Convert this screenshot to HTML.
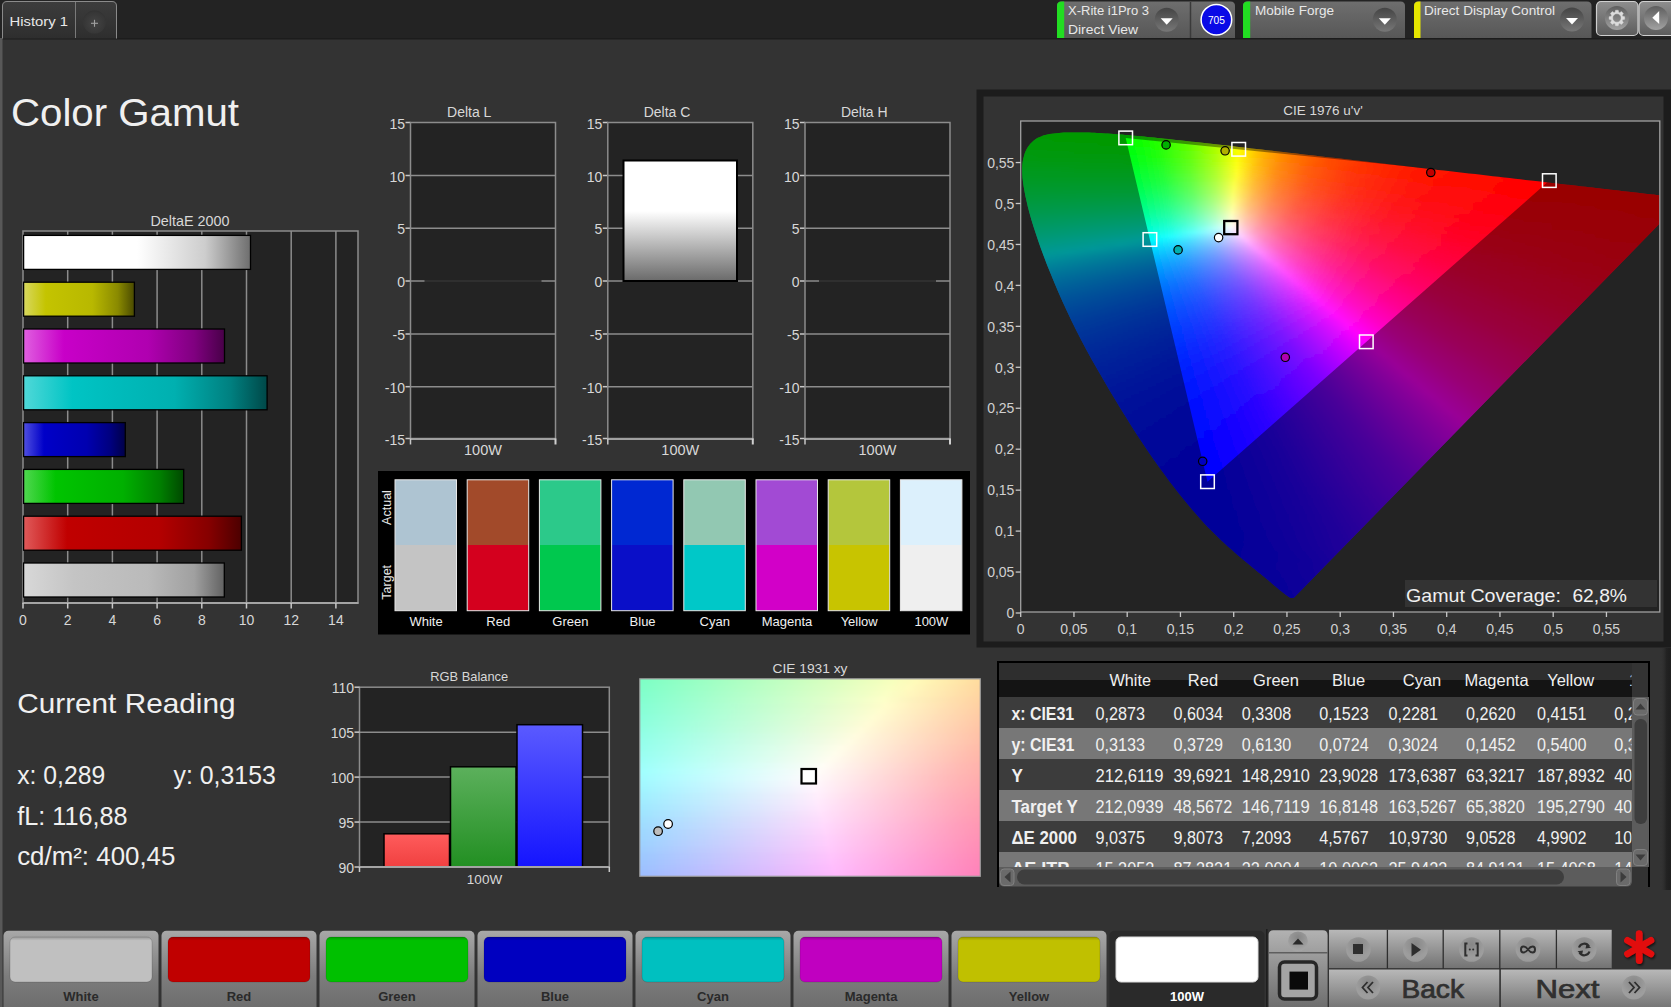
<!DOCTYPE html>
<html><head><meta charset="utf-8"><style>
html,body{margin:0;padding:0;background:#333;overflow:hidden}
svg{display:block;font-family:"Liberation Sans",sans-serif}
</style></head><body>
<svg width="1671" height="1007" viewBox="0 0 1671 1007">
<defs><linearGradient id="tabg" x1="0" y1="0" x2="0" y2="1"><stop offset="0" stop-color="#3c3c3c"/><stop offset="1" stop-color="#2e2e2e"/></linearGradient><radialGradient id="plusg" cx="0.5" cy="0.55" r="0.6"><stop offset="0" stop-color="#444444"/><stop offset="0.8" stop-color="#363636"/><stop offset="1" stop-color="#2e2e2e"/></radialGradient><linearGradient id="devg" x1="0" y1="0" x2="0" y2="1"><stop offset="0" stop-color="#6e6e6e"/><stop offset="1" stop-color="#575757"/></linearGradient><linearGradient id="ddg" x1="0" y1="0" x2="0" y2="1"><stop offset="0" stop-color="#444444"/><stop offset="1" stop-color="#777777"/></linearGradient><linearGradient id="btng" x1="0" y1="0" x2="0" y2="1"><stop offset="0" stop-color="#8e8e8e"/><stop offset="1" stop-color="#5c5c5c"/></linearGradient><linearGradient id="gcg" x1="0" y1="0" x2="0" y2="1"><stop offset="0" stop-color="#5e5e5e"/><stop offset="1" stop-color="#a2a2a2"/></linearGradient><linearGradient id="deb0" x1="0" y1="0" x2="1" y2="0"><stop offset="0" stop-color="#ffffff"/><stop offset="0.5" stop-color="#ffffff"/><stop offset="0.8" stop-color="#cdcdcd"/><stop offset="1" stop-color="#6e6e6e"/></linearGradient><linearGradient id="deb1" x1="0" y1="0" x2="1" y2="0"><stop offset="0" stop-color="#d8d860"/><stop offset="0.2" stop-color="#c4c400"/><stop offset="0.62" stop-color="#b8b800"/><stop offset="0.85" stop-color="#8a8a00"/><stop offset="1" stop-color="#4a4a00"/></linearGradient><linearGradient id="deb2" x1="0" y1="0" x2="1" y2="0"><stop offset="0" stop-color="#e060e0"/><stop offset="0.2" stop-color="#c800c8"/><stop offset="0.62" stop-color="#b000b0"/><stop offset="0.85" stop-color="#800080"/><stop offset="1" stop-color="#480048"/></linearGradient><linearGradient id="deb3" x1="0" y1="0" x2="1" y2="0"><stop offset="0" stop-color="#50d8d8"/><stop offset="0.2" stop-color="#00c4c4"/><stop offset="0.62" stop-color="#00b0b0"/><stop offset="0.85" stop-color="#008080"/><stop offset="1" stop-color="#004848"/></linearGradient><linearGradient id="deb4" x1="0" y1="0" x2="1" y2="0"><stop offset="0" stop-color="#5050e0"/><stop offset="0.2" stop-color="#0000c8"/><stop offset="0.62" stop-color="#0000b0"/><stop offset="0.85" stop-color="#000080"/><stop offset="1" stop-color="#000048"/></linearGradient><linearGradient id="deb5" x1="0" y1="0" x2="1" y2="0"><stop offset="0" stop-color="#50d850"/><stop offset="0.2" stop-color="#00c400"/><stop offset="0.62" stop-color="#00b000"/><stop offset="0.85" stop-color="#008000"/><stop offset="1" stop-color="#004800"/></linearGradient><linearGradient id="deb6" x1="0" y1="0" x2="1" y2="0"><stop offset="0" stop-color="#e05a5a"/><stop offset="0.2" stop-color="#c00000"/><stop offset="0.62" stop-color="#b40000"/><stop offset="0.85" stop-color="#860000"/><stop offset="1" stop-color="#4c0000"/></linearGradient><linearGradient id="deb7" x1="0" y1="0" x2="1" y2="0"><stop offset="0" stop-color="#d8d8d8"/><stop offset="0.25" stop-color="#c4c4c4"/><stop offset="0.62" stop-color="#bababa"/><stop offset="0.85" stop-color="#a0a0a0"/><stop offset="1" stop-color="#626262"/></linearGradient><linearGradient id="dcg" x1="0" y1="0" x2="0" y2="1"><stop offset="0" stop-color="#ffffff"/><stop offset="0.42" stop-color="#ffffff"/><stop offset="1" stop-color="#6a6a6a"/></linearGradient><clipPath id="hsclip"><path d="M1294.2,597.4 L1294.2,597.4 L1294.2,597.4 L1294.1,597.4 L1294.1,597.4 L1294.1,597.4 L1294.0,597.4 L1294.0,597.4 L1293.9,597.5 L1293.9,597.5 L1293.9,597.6 L1293.8,597.6 L1293.8,597.7 L1293.7,597.7 L1293.7,597.7 L1293.6,597.7 L1293.6,597.7 L1293.5,597.7 L1293.4,597.7 L1293.4,597.7 L1293.3,597.8 L1293.2,597.8 L1293.2,597.9 L1293.1,597.9 L1293.0,597.9 L1292.9,598.0 L1292.9,598.0 L1292.8,598.0 L1292.7,598.0 L1292.6,598.0 L1292.5,598.0 L1292.4,598.0 L1292.3,598.0 L1292.2,598.0 L1292.0,598.0 L1291.9,598.0 L1291.8,598.0 L1291.7,598.0 L1291.5,598.0 L1291.4,598.0 L1291.2,598.0 L1291.1,598.0 L1290.9,598.0 L1290.7,597.9 L1290.5,597.8 L1290.2,597.7 L1289.9,597.5 L1289.6,597.4 L1289.3,597.2 L1288.9,596.9 L1288.5,596.7 L1288.1,596.4 L1287.6,596.1 L1287.1,595.7 L1286.5,595.3 L1286.0,594.9 L1285.4,594.5 L1284.8,594.1 L1284.2,593.6 L1283.5,593.0 L1282.8,592.5 L1282.0,591.8 L1281.2,591.2 L1280.3,590.5 L1279.4,589.7 L1278.4,588.9 L1277.4,588.1 L1276.4,587.2 L1275.3,586.3 L1274.2,585.4 L1273.1,584.4 L1271.9,583.4 L1270.6,582.3 L1269.3,581.2 L1268.0,580.1 L1266.6,579.0 L1265.2,577.8 L1263.7,576.5 L1262.1,575.2 L1260.4,573.8 L1258.6,572.4 L1256.7,570.9 L1254.8,569.3 L1252.8,567.7 L1250.8,566.0 L1248.7,564.3 L1246.6,562.5 L1244.4,560.7 L1242.1,558.8 L1239.7,556.8 L1237.3,554.7 L1234.7,552.4 L1232.1,550.1 L1229.3,547.7 L1226.5,545.2 L1223.6,542.5 L1220.6,539.7 L1217.6,536.7 L1214.5,533.7 L1211.3,530.5 L1207.9,527.2 L1204.4,523.4 L1200.6,519.3 L1196.7,514.8 L1192.5,510.0 L1188.1,504.8 L1183.6,499.3 L1178.9,493.5 L1174.1,487.3 L1169.2,480.9 L1164.2,474.0 L1159.0,466.9 L1153.7,459.4 L1148.3,451.7 L1142.8,443.6 L1137.3,435.2 L1131.7,426.4 L1126.0,417.3 L1120.2,408.1 L1114.5,398.6 L1108.9,389.2 L1103.3,379.6 L1097.6,369.8 L1092.0,359.9 L1086.5,349.9 L1081.2,340.1 L1076.2,330.3 L1071.5,320.7 L1066.9,311.0 L1062.5,301.4 L1058.3,291.9 L1054.4,282.7 L1050.7,273.8 L1047.2,265.2 L1044.0,256.8 L1041.0,248.7 L1038.2,240.8 L1035.7,233.3 L1033.4,226.2 L1031.3,219.5 L1029.5,213.1 L1027.9,207.0 L1026.6,201.3 L1025.4,195.9 L1024.4,190.8 L1023.6,186.1 L1023.0,181.8 L1022.5,177.8 L1022.3,174.0 L1022.2,170.5 L1022.2,167.2 L1022.4,164.0 L1022.8,161.1 L1023.3,158.4 L1024.0,155.9 L1024.7,153.5 L1025.6,151.2 L1026.7,149.1 L1027.9,147.0 L1029.2,145.2 L1030.6,143.5 L1032.2,141.9 L1033.8,140.5 L1035.5,139.2 L1037.3,138.1 L1039.2,137.2 L1041.2,136.4 L1043.2,135.6 L1045.3,135.0 L1047.5,134.4 L1049.7,134.0 L1052.0,133.7 L1054.3,133.4 L1056.7,133.2 L1059.0,132.9 L1061.5,132.8 L1063.9,132.6 L1066.4,132.6 L1069.0,132.5 L1071.5,132.5 L1074.0,132.4 L1076.5,132.4 L1079.0,132.4 L1081.6,132.5 L1084.1,132.5 L1086.6,132.6 L1089.2,132.6 L1091.8,132.7 L1094.4,132.8 L1097.0,132.9 L1099.7,133.1 L1102.4,133.2 L1105.1,133.4 L1107.8,133.6 L1110.6,133.7 L1113.4,133.9 L1116.3,134.2 L1119.2,134.4 L1122.2,134.6 L1125.1,134.9 L1128.2,135.1 L1131.2,135.4 L1134.3,135.7 L1137.5,136.0 L1140.7,136.3 L1144.0,136.6 L1147.3,136.9 L1150.7,137.3 L1154.1,137.6 L1157.6,138.0 L1161.1,138.3 L1164.7,138.7 L1168.4,139.1 L1172.2,139.5 L1176.0,139.9 L1179.8,140.3 L1183.8,140.8 L1187.8,141.2 L1191.8,141.7 L1195.9,142.1 L1200.1,142.6 L1204.4,143.1 L1208.8,143.6 L1213.2,144.1 L1217.7,144.6 L1222.3,145.1 L1226.9,145.6 L1231.7,146.1 L1236.5,146.7 L1241.3,147.2 L1246.3,147.8 L1251.3,148.4 L1256.4,149.0 L1261.6,149.6 L1266.9,150.2 L1272.2,150.8 L1277.7,151.4 L1283.2,152.0 L1288.7,152.7 L1294.4,153.3 L1300.1,154.0 L1305.9,154.7 L1311.8,155.3 L1317.7,156.0 L1323.7,156.7 L1329.8,157.4 L1335.9,158.1 L1342.1,158.8 L1348.3,159.5 L1354.6,160.3 L1361.0,161.0 L1367.4,161.7 L1373.8,162.5 L1380.2,163.2 L1386.7,163.9 L1393.2,164.7 L1399.8,165.5 L1406.3,166.2 L1412.7,167.0 L1419.1,167.7 L1425.4,168.4 L1431.7,169.1 L1437.9,169.9 L1444.2,170.6 L1450.4,171.3 L1456.6,172.0 L1462.8,172.7 L1469.0,173.4 L1475.2,174.1 L1481.2,174.8 L1487.1,175.5 L1492.9,176.2 L1498.6,176.8 L1504.2,177.4 L1509.7,178.1 L1515.1,178.7 L1520.4,179.3 L1525.5,179.9 L1530.6,180.5 L1535.6,181.0 L1540.4,181.6 L1545.2,182.2 L1549.8,182.7 L1554.2,183.2 L1558.6,183.7 L1562.8,184.2 L1566.9,184.7 L1570.9,185.1 L1574.8,185.6 L1578.5,186.0 L1582.2,186.4 L1585.7,186.8 L1589.1,187.2 L1592.5,187.6 L1595.7,188.0 L1598.9,188.3 L1601.9,188.7 L1604.9,189.0 L1607.8,189.3 L1610.6,189.7 L1613.4,190.0 L1616.1,190.3 L1618.7,190.6 L1621.3,190.9 L1623.8,191.2 L1626.3,191.5 L1628.7,191.8 L1631.0,192.0 L1633.3,192.3 L1635.5,192.5 L1637.6,192.8 L1639.6,193.0 L1641.6,193.3 L1643.5,193.5 L1645.4,193.7 L1647.2,193.9 L1648.9,194.1 L1650.5,194.3 L1652.1,194.4 L1653.6,194.6 L1655.1,194.8 L1656.4,194.9 L1657.7,195.1 L1659.0,195.2 L1660.2,195.4 L1661.4,195.5 L1662.5,195.6 L1663.6,195.8 L1664.6,195.9 L1665.6,196.0 L1666.6,196.1 L1667.5,196.2 L1668.3,196.3 L1669.1,196.4 L1669.9,196.5 L1670.6,196.6 L1671.3,196.6 L1671.9,196.7 L1672.5,196.8 L1673.0,196.8 L1673.4,196.9 L1673.9,196.9 L1674.4,197.0 L1674.8,197.1 L1675.2,197.1 L1675.6,197.1 L1676.0,197.2 L1676.4,197.2 L1676.9,197.3 L1677.5,197.4 L1678.1,197.4 L1678.8,197.5 L1679.5,197.6 L1680.2,197.7 L1680.9,197.8 L1681.6,197.8 L1682.3,197.9 L1683.0,198.0 L1683.7,198.1 L1684.2,198.1 L1684.6,198.2 Z"/></clipPath><clipPath id="plotclip"><rect x="1020.7" y="121" width="639.0999999999999" height="491"/></clipPath><filter id="hblur" x="-5%" y="-5%" width="110%" height="110%"><feGaussianBlur stdDeviation="0.8 1.5"/></filter><linearGradient id="h0" gradientUnits="userSpaceOnUse" x1="1036.7" y1="0" x2="1138.7" y2="0"><stop offset="0.000" stop-color="#00ff00"/><stop offset="0.882" stop-color="#02ff00"/><stop offset="1.000" stop-color="#0eff00"/></linearGradient><linearGradient id="h1" gradientUnits="userSpaceOnUse" x1="1027.7" y1="0" x2="1179.7" y2="0"><stop offset="0.000" stop-color="#00ff00"/><stop offset="0.658" stop-color="#02ff00"/><stop offset="0.842" stop-color="#24ff00"/><stop offset="1.000" stop-color="#50ff00"/></linearGradient><linearGradient id="h2" gradientUnits="userSpaceOnUse" x1="1022.7" y1="0" x2="1214.7" y2="0"><stop offset="0.000" stop-color="#00ff02"/><stop offset="0.552" stop-color="#02ff00"/><stop offset="0.698" stop-color="#25ff00"/><stop offset="0.865" stop-color="#64ff00"/><stop offset="1.000" stop-color="#a9ff00"/></linearGradient><linearGradient id="h3" gradientUnits="userSpaceOnUse" x1="1019.7" y1="0" x2="1251.7" y2="0"><stop offset="0.000" stop-color="#00ff06"/><stop offset="0.474" stop-color="#03ff00"/><stop offset="0.595" stop-color="#26ff00"/><stop offset="0.733" stop-color="#66ff00"/><stop offset="0.862" stop-color="#b8ff00"/><stop offset="0.948" stop-color="#feff00"/><stop offset="1.000" stop-color="#ffd700"/></linearGradient><linearGradient id="h4" gradientUnits="userSpaceOnUse" x1="1017.7" y1="0" x2="1285.7" y2="0"><stop offset="0.000" stop-color="#00ff09"/><stop offset="0.418" stop-color="#02ff01"/><stop offset="0.522" stop-color="#25ff00"/><stop offset="0.634" stop-color="#60ff00"/><stop offset="0.739" stop-color="#acff00"/><stop offset="0.828" stop-color="#fffe00"/><stop offset="0.896" stop-color="#ffc400"/><stop offset="0.985" stop-color="#ff8f00"/><stop offset="1.000" stop-color="#ff8800"/></linearGradient><linearGradient id="h5" gradientUnits="userSpaceOnUse" x1="1016.7" y1="0" x2="1320.7" y2="0"><stop offset="0.000" stop-color="#00ff0d"/><stop offset="0.375" stop-color="#02ff04"/><stop offset="0.467" stop-color="#25ff02"/><stop offset="0.566" stop-color="#62ff00"/><stop offset="0.658" stop-color="#b0ff00"/><stop offset="0.730" stop-color="#fdff00"/><stop offset="0.803" stop-color="#ffbb00"/><stop offset="0.888" stop-color="#ff8500"/><stop offset="1.000" stop-color="#ff5900"/></linearGradient><linearGradient id="h6" gradientUnits="userSpaceOnUse" x1="1015.7" y1="0" x2="1355.7" y2="0"><stop offset="0.000" stop-color="#00ff11"/><stop offset="0.341" stop-color="#02ff09"/><stop offset="0.418" stop-color="#23ff06"/><stop offset="0.506" stop-color="#5fff03"/><stop offset="0.588" stop-color="#adff01"/><stop offset="0.653" stop-color="#fbff00"/><stop offset="0.671" stop-color="#ffed00"/><stop offset="0.729" stop-color="#ffb200"/><stop offset="0.806" stop-color="#ff7f00"/><stop offset="0.912" stop-color="#ff5200"/><stop offset="1.000" stop-color="#ff3b00"/></linearGradient><linearGradient id="h7" gradientUnits="userSpaceOnUse" x1="1014.7" y1="0" x2="1390.7" y2="0"><stop offset="0.000" stop-color="#00ff16"/><stop offset="0.314" stop-color="#02ff0d"/><stop offset="0.383" stop-color="#23ff0b"/><stop offset="0.463" stop-color="#61ff08"/><stop offset="0.537" stop-color="#b0ff05"/><stop offset="0.596" stop-color="#fffe03"/><stop offset="0.644" stop-color="#ffc201"/><stop offset="0.707" stop-color="#ff8c00"/><stop offset="0.793" stop-color="#ff5f00"/><stop offset="0.920" stop-color="#ff3600"/><stop offset="1.000" stop-color="#ff2600"/></linearGradient><linearGradient id="h8" gradientUnits="userSpaceOnUse" x1="1014.7" y1="0" x2="1424.7" y2="0"><stop offset="0.000" stop-color="#00ff1b"/><stop offset="0.293" stop-color="#03ff13"/><stop offset="0.356" stop-color="#26ff10"/><stop offset="0.429" stop-color="#66ff0d"/><stop offset="0.498" stop-color="#b7ff0a"/><stop offset="0.546" stop-color="#fffc08"/><stop offset="0.590" stop-color="#ffc105"/><stop offset="0.649" stop-color="#ff8b02"/><stop offset="0.727" stop-color="#ff5d00"/><stop offset="0.844" stop-color="#ff3500"/><stop offset="1.000" stop-color="#ff1800"/></linearGradient><linearGradient id="h9" gradientUnits="userSpaceOnUse" x1="1014.7" y1="0" x2="1458.7" y2="0"><stop offset="0.000" stop-color="#00ff20"/><stop offset="0.270" stop-color="#02ff19"/><stop offset="0.329" stop-color="#25ff17"/><stop offset="0.392" stop-color="#60ff14"/><stop offset="0.455" stop-color="#b1ff11"/><stop offset="0.500" stop-color="#fbff0f"/><stop offset="0.518" stop-color="#ffe40d"/><stop offset="0.563" stop-color="#ffaa08"/><stop offset="0.622" stop-color="#ff7904"/><stop offset="0.707" stop-color="#ff4c01"/><stop offset="0.833" stop-color="#ff2700"/><stop offset="1.000" stop-color="#ff0f00"/></linearGradient><linearGradient id="h10" gradientUnits="userSpaceOnUse" x1="1014.7" y1="0" x2="1494.7" y2="0"><stop offset="0.000" stop-color="#00ff26"/><stop offset="0.254" stop-color="#03ff1f"/><stop offset="0.308" stop-color="#27ff1d"/><stop offset="0.367" stop-color="#64ff1b"/><stop offset="0.421" stop-color="#b2ff19"/><stop offset="0.463" stop-color="#fdff17"/><stop offset="0.508" stop-color="#ffb80f"/><stop offset="0.558" stop-color="#ff8409"/><stop offset="0.629" stop-color="#ff5604"/><stop offset="0.733" stop-color="#ff2f01"/><stop offset="0.896" stop-color="#ff1100"/><stop offset="1.000" stop-color="#ff0700"/></linearGradient><linearGradient id="h11" gradientUnits="userSpaceOnUse" x1="1014.7" y1="0" x2="1528.7" y2="0"><stop offset="0.000" stop-color="#00ff2b"/><stop offset="0.237" stop-color="#02ff26"/><stop offset="0.288" stop-color="#26ff25"/><stop offset="0.342" stop-color="#64ff23"/><stop offset="0.393" stop-color="#b2ff21"/><stop offset="0.432" stop-color="#feff1f"/><stop offset="0.467" stop-color="#ffc116"/><stop offset="0.510" stop-color="#ff8d0f"/><stop offset="0.572" stop-color="#ff5d09"/><stop offset="0.661" stop-color="#ff3503"/><stop offset="0.798" stop-color="#ff1600"/><stop offset="1.000" stop-color="#ff0200"/></linearGradient><linearGradient id="h12" gradientUnits="userSpaceOnUse" x1="1014.7" y1="0" x2="1564.7" y2="0"><stop offset="0.000" stop-color="#00ff31"/><stop offset="0.222" stop-color="#02ff2e"/><stop offset="0.265" stop-color="#22ff2d"/><stop offset="0.316" stop-color="#5eff2b"/><stop offset="0.364" stop-color="#acff2a"/><stop offset="0.404" stop-color="#fffe29"/><stop offset="0.433" stop-color="#ffc51f"/><stop offset="0.473" stop-color="#ff9015"/><stop offset="0.527" stop-color="#ff610d"/><stop offset="0.607" stop-color="#ff3807"/><stop offset="0.727" stop-color="#ff1802"/><stop offset="0.924" stop-color="#ff0300"/><stop offset="1.000" stop-color="#ff0000"/></linearGradient><linearGradient id="h13" gradientUnits="userSpaceOnUse" x1="1014.7" y1="0" x2="1598.7" y2="0"><stop offset="0.000" stop-color="#00ff37"/><stop offset="0.212" stop-color="#03ff35"/><stop offset="0.253" stop-color="#24ff35"/><stop offset="0.301" stop-color="#63ff34"/><stop offset="0.346" stop-color="#b3ff33"/><stop offset="0.380" stop-color="#fffd32"/><stop offset="0.408" stop-color="#ffc327"/><stop offset="0.445" stop-color="#ff8e1b"/><stop offset="0.497" stop-color="#ff5f12"/><stop offset="0.572" stop-color="#ff370a"/><stop offset="0.685" stop-color="#ff1703"/><stop offset="0.870" stop-color="#ff0200"/><stop offset="1.000" stop-color="#ff0000"/></linearGradient><linearGradient id="h14" gradientUnits="userSpaceOnUse" x1="1014.7" y1="0" x2="1634.7" y2="0"><stop offset="0.000" stop-color="#00ff3e"/><stop offset="0.200" stop-color="#02ff3e"/><stop offset="0.239" stop-color="#23ff3e"/><stop offset="0.284" stop-color="#62ff3e"/><stop offset="0.326" stop-color="#b3ff3e"/><stop offset="0.355" stop-color="#faff3e"/><stop offset="0.361" stop-color="#fff33b"/><stop offset="0.390" stop-color="#ffb62c"/><stop offset="0.429" stop-color="#ff811f"/><stop offset="0.481" stop-color="#ff5414"/><stop offset="0.558" stop-color="#ff2e0b"/><stop offset="0.677" stop-color="#ff1104"/><stop offset="0.861" stop-color="#ff0000"/><stop offset="1.000" stop-color="#ff0000"/></linearGradient><linearGradient id="h15" gradientUnits="userSpaceOnUse" x1="1014.7" y1="0" x2="1664.7" y2="0"><stop offset="0.000" stop-color="#00ff45"/><stop offset="0.194" stop-color="#03ff47"/><stop offset="0.231" stop-color="#26ff47"/><stop offset="0.271" stop-color="#62ff48"/><stop offset="0.311" stop-color="#b4ff49"/><stop offset="0.338" stop-color="#fcff4a"/><stop offset="0.369" stop-color="#ffba36"/><stop offset="0.403" stop-color="#ff8628"/><stop offset="0.449" stop-color="#ff591b"/><stop offset="0.517" stop-color="#ff3310"/><stop offset="0.622" stop-color="#ff1407"/><stop offset="0.791" stop-color="#ff0101"/><stop offset="1.000" stop-color="#ff0000"/></linearGradient><linearGradient id="h16" gradientUnits="userSpaceOnUse" x1="1014.7" y1="0" x2="1664.7" y2="0"><stop offset="0.000" stop-color="#00ff4c"/><stop offset="0.194" stop-color="#02ff50"/><stop offset="0.231" stop-color="#25ff52"/><stop offset="0.271" stop-color="#61ff53"/><stop offset="0.308" stop-color="#adff55"/><stop offset="0.338" stop-color="#fdff56"/><stop offset="0.366" stop-color="#ffbe41"/><stop offset="0.400" stop-color="#ff8830"/><stop offset="0.446" stop-color="#ff5a21"/><stop offset="0.514" stop-color="#ff3314"/><stop offset="0.618" stop-color="#ff140a"/><stop offset="0.785" stop-color="#ff0103"/><stop offset="1.000" stop-color="#ff0000"/></linearGradient><linearGradient id="h17" gradientUnits="userSpaceOnUse" x1="1015.7" y1="0" x2="1665.7" y2="0"><stop offset="0.000" stop-color="#00ff53"/><stop offset="0.194" stop-color="#02ff5a"/><stop offset="0.231" stop-color="#26ff5c"/><stop offset="0.271" stop-color="#63ff5f"/><stop offset="0.308" stop-color="#b1ff61"/><stop offset="0.335" stop-color="#fbff63"/><stop offset="0.345" stop-color="#ffe95c"/><stop offset="0.372" stop-color="#ffae46"/><stop offset="0.409" stop-color="#ff7a33"/><stop offset="0.458" stop-color="#ff4f23"/><stop offset="0.532" stop-color="#ff2a15"/><stop offset="0.649" stop-color="#ff0e0a"/><stop offset="0.815" stop-color="#ff0003"/><stop offset="1.000" stop-color="#ff0000"/></linearGradient><linearGradient id="h18" gradientUnits="userSpaceOnUse" x1="1015.7" y1="0" x2="1665.7" y2="0"><stop offset="0.000" stop-color="#00ff5b"/><stop offset="0.197" stop-color="#03ff65"/><stop offset="0.234" stop-color="#28ff68"/><stop offset="0.274" stop-color="#68ff6b"/><stop offset="0.311" stop-color="#b9ff6f"/><stop offset="0.335" stop-color="#fcff72"/><stop offset="0.366" stop-color="#ffb755"/><stop offset="0.400" stop-color="#ff833f"/><stop offset="0.446" stop-color="#ff562c"/><stop offset="0.514" stop-color="#ff301c"/><stop offset="0.618" stop-color="#ff120f"/><stop offset="0.785" stop-color="#ff0005"/><stop offset="1.000" stop-color="#ff0001"/></linearGradient><linearGradient id="h19" gradientUnits="userSpaceOnUse" x1="1016.7" y1="0" x2="1664.7" y2="0"><stop offset="0.000" stop-color="#00ff63"/><stop offset="0.198" stop-color="#03ff70"/><stop offset="0.231" stop-color="#25ff74"/><stop offset="0.272" stop-color="#65ff78"/><stop offset="0.309" stop-color="#b6ff7d"/><stop offset="0.333" stop-color="#f9ff81"/><stop offset="0.340" stop-color="#fff27b"/><stop offset="0.364" stop-color="#ffb861"/><stop offset="0.398" stop-color="#ff8348"/><stop offset="0.444" stop-color="#ff5533"/><stop offset="0.512" stop-color="#ff2f21"/><stop offset="0.617" stop-color="#ff1112"/><stop offset="0.781" stop-color="#ff0007"/><stop offset="1.000" stop-color="#ff0001"/></linearGradient><linearGradient id="h20" gradientUnits="userSpaceOnUse" x1="1017.7" y1="0" x2="1665.7" y2="0"><stop offset="0.000" stop-color="#00ff6c"/><stop offset="0.194" stop-color="#01ff7c"/><stop offset="0.228" stop-color="#22ff80"/><stop offset="0.265" stop-color="#5bff85"/><stop offset="0.302" stop-color="#abff8b"/><stop offset="0.333" stop-color="#fffe90"/><stop offset="0.355" stop-color="#ffc674"/><stop offset="0.386" stop-color="#ff9058"/><stop offset="0.429" stop-color="#ff5f3f"/><stop offset="0.491" stop-color="#ff372a"/><stop offset="0.583" stop-color="#ff1719"/><stop offset="0.735" stop-color="#ff020b"/><stop offset="1.000" stop-color="#ff0002"/></linearGradient><linearGradient id="h21" gradientUnits="userSpaceOnUse" x1="1018.7" y1="0" x2="1664.7" y2="0"><stop offset="0.000" stop-color="#00ff74"/><stop offset="0.195" stop-color="#01ff88"/><stop offset="0.229" stop-color="#23ff8d"/><stop offset="0.266" stop-color="#5eff94"/><stop offset="0.303" stop-color="#afff9b"/><stop offset="0.331" stop-color="#fdffa1"/><stop offset="0.359" stop-color="#ffbb7c"/><stop offset="0.390" stop-color="#ff875f"/><stop offset="0.433" stop-color="#ff5944"/><stop offset="0.495" stop-color="#ff332e"/><stop offset="0.591" stop-color="#ff151b"/><stop offset="0.746" stop-color="#ff010c"/><stop offset="1.000" stop-color="#ff0003"/></linearGradient><linearGradient id="h22" gradientUnits="userSpaceOnUse" x1="1018.7" y1="0" x2="1664.7" y2="0"><stop offset="0.000" stop-color="#00ff7d"/><stop offset="0.198" stop-color="#02ff95"/><stop offset="0.232" stop-color="#26ff9c"/><stop offset="0.269" stop-color="#63ffa3"/><stop offset="0.303" stop-color="#afffac"/><stop offset="0.331" stop-color="#ffffb3"/><stop offset="0.356" stop-color="#ffbf8c"/><stop offset="0.387" stop-color="#ff8a6b"/><stop offset="0.430" stop-color="#ff5a4d"/><stop offset="0.492" stop-color="#ff3334"/><stop offset="0.588" stop-color="#ff141f"/><stop offset="0.743" stop-color="#ff010f"/><stop offset="1.000" stop-color="#ff0004"/></linearGradient><linearGradient id="h23" gradientUnits="userSpaceOnUse" x1="1019.7" y1="0" x2="1665.7" y2="0"><stop offset="0.000" stop-color="#00ff87"/><stop offset="0.198" stop-color="#03ffa3"/><stop offset="0.232" stop-color="#27ffaa"/><stop offset="0.269" stop-color="#65ffb4"/><stop offset="0.303" stop-color="#b4ffbd"/><stop offset="0.328" stop-color="#fbffc6"/><stop offset="0.347" stop-color="#ffcfa6"/><stop offset="0.375" stop-color="#ff9881"/><stop offset="0.412" stop-color="#ff6860"/><stop offset="0.464" stop-color="#ff4044"/><stop offset="0.545" stop-color="#ff1e2b"/><stop offset="0.675" stop-color="#ff0617"/><stop offset="0.842" stop-color="#ff000b"/><stop offset="1.000" stop-color="#ff0005"/></linearGradient><linearGradient id="h24" gradientUnits="userSpaceOnUse" x1="1020.7" y1="0" x2="1664.7" y2="0"><stop offset="0.000" stop-color="#00ff91"/><stop offset="0.199" stop-color="#03ffb2"/><stop offset="0.230" stop-color="#23ffb9"/><stop offset="0.267" stop-color="#61ffc4"/><stop offset="0.301" stop-color="#b0ffcf"/><stop offset="0.329" stop-color="#fffcd7"/><stop offset="0.351" stop-color="#ffc2ad"/><stop offset="0.379" stop-color="#ff8f87"/><stop offset="0.419" stop-color="#ff5f63"/><stop offset="0.478" stop-color="#ff3644"/><stop offset="0.568" stop-color="#ff172a"/><stop offset="0.714" stop-color="#ff0215"/><stop offset="1.000" stop-color="#ff0006"/></linearGradient><linearGradient id="h25" gradientUnits="userSpaceOnUse" x1="1021.7" y1="0" x2="1665.7" y2="0"><stop offset="0.000" stop-color="#00ff9b"/><stop offset="0.193" stop-color="#00ffbf"/><stop offset="0.217" stop-color="#14ffc6"/><stop offset="0.252" stop-color="#46ffd1"/><stop offset="0.286" stop-color="#8dffdd"/><stop offset="0.317" stop-color="#e1ffea"/><stop offset="0.326" stop-color="#ffffee"/><stop offset="0.348" stop-color="#ffc3bf"/><stop offset="0.376" stop-color="#ff8f95"/><stop offset="0.416" stop-color="#ff5f6e"/><stop offset="0.472" stop-color="#ff374c"/><stop offset="0.559" stop-color="#ff1730"/><stop offset="0.699" stop-color="#ff0219"/><stop offset="1.000" stop-color="#ff0007"/></linearGradient><linearGradient id="h26" gradientUnits="userSpaceOnUse" x1="1023.7" y1="0" x2="1665.7" y2="0"><stop offset="0.000" stop-color="#00ffa6"/><stop offset="0.181" stop-color="#00ffcc"/><stop offset="0.199" stop-color="#04ffd1"/><stop offset="0.231" stop-color="#27ffdc"/><stop offset="0.265" stop-color="#63ffe9"/><stop offset="0.299" stop-color="#b5fff8"/><stop offset="0.324" stop-color="#fbf9ff"/><stop offset="0.340" stop-color="#ffd0dc"/><stop offset="0.364" stop-color="#ff9caf"/><stop offset="0.399" stop-color="#ff6c85"/><stop offset="0.449" stop-color="#ff425f"/><stop offset="0.523" stop-color="#ff203e"/><stop offset="0.645" stop-color="#ff0723"/><stop offset="0.794" stop-color="#ff0013"/><stop offset="1.000" stop-color="#ff0009"/></linearGradient><linearGradient id="h27" gradientUnits="userSpaceOnUse" x1="1024.7" y1="0" x2="1664.7" y2="0"><stop offset="0.000" stop-color="#00ffb1"/><stop offset="0.172" stop-color="#00ffd9"/><stop offset="0.200" stop-color="#04ffe2"/><stop offset="0.231" stop-color="#28ffee"/><stop offset="0.266" stop-color="#66fffd"/><stop offset="0.316" stop-color="#d5e9ff"/><stop offset="0.331" stop-color="#fde1ff"/><stop offset="0.359" stop-color="#ffa2c5"/><stop offset="0.394" stop-color="#ff7095"/><stop offset="0.441" stop-color="#ff466c"/><stop offset="0.512" stop-color="#ff2347"/><stop offset="0.625" stop-color="#ff092a"/><stop offset="0.769" stop-color="#ff0018"/><stop offset="1.000" stop-color="#ff000a"/></linearGradient><linearGradient id="h28" gradientUnits="userSpaceOnUse" x1="1025.7" y1="0" x2="1665.7" y2="0"><stop offset="0.000" stop-color="#00ffbc"/><stop offset="0.163" stop-color="#00ffe6"/><stop offset="0.197" stop-color="#02fff3"/><stop offset="0.228" stop-color="#25feff"/><stop offset="0.272" stop-color="#6deaff"/><stop offset="0.319" stop-color="#d0d4ff"/><stop offset="0.338" stop-color="#fecbff"/><stop offset="0.366" stop-color="#ff92c6"/><stop offset="0.403" stop-color="#ff6294"/><stop offset="0.456" stop-color="#ff3a68"/><stop offset="0.537" stop-color="#ff1943"/><stop offset="0.669" stop-color="#ff0326"/><stop offset="0.919" stop-color="#ff000f"/><stop offset="1.000" stop-color="#ff000b"/></linearGradient><linearGradient id="h29" gradientUnits="userSpaceOnUse" x1="1026.7" y1="0" x2="1662.7" y2="0"><stop offset="0.000" stop-color="#00ffc8"/><stop offset="0.154" stop-color="#00fff4"/><stop offset="0.192" stop-color="#00fbff"/><stop offset="0.214" stop-color="#10f2ff"/><stop offset="0.258" stop-color="#4cdfff"/><stop offset="0.308" stop-color="#aac9ff"/><stop offset="0.346" stop-color="#ffb7ff"/><stop offset="0.374" stop-color="#ff84c7"/><stop offset="0.412" stop-color="#ff5896"/><stop offset="0.465" stop-color="#ff346b"/><stop offset="0.547" stop-color="#ff1646"/><stop offset="0.682" stop-color="#ff0227"/><stop offset="0.934" stop-color="#ff0010"/><stop offset="1.000" stop-color="#ff000d"/></linearGradient><linearGradient id="h30" gradientUnits="userSpaceOnUse" x1="1028.7" y1="0" x2="1658.7" y2="0"><stop offset="0.000" stop-color="#00ffd5"/><stop offset="0.146" stop-color="#00fcff"/><stop offset="0.200" stop-color="#03e7ff"/><stop offset="0.238" stop-color="#2bd7ff"/><stop offset="0.289" stop-color="#7bc2ff"/><stop offset="0.343" stop-color="#e7aaff"/><stop offset="0.352" stop-color="#fca6ff"/><stop offset="0.387" stop-color="#ff71c1"/><stop offset="0.429" stop-color="#ff4a90"/><stop offset="0.489" stop-color="#ff2865"/><stop offset="0.581" stop-color="#ff0e41"/><stop offset="0.721" stop-color="#ff0025"/><stop offset="1.000" stop-color="#ff000f"/></linearGradient><linearGradient id="h31" gradientUnits="userSpaceOnUse" x1="1029.7" y1="0" x2="1653.7" y2="0"><stop offset="0.000" stop-color="#00ffe2"/><stop offset="0.103" stop-color="#00fcff"/><stop offset="0.202" stop-color="#03d7ff"/><stop offset="0.240" stop-color="#29c8ff"/><stop offset="0.292" stop-color="#75b3ff"/><stop offset="0.346" stop-color="#db9cff"/><stop offset="0.362" stop-color="#fd95ff"/><stop offset="0.397" stop-color="#ff66c2"/><stop offset="0.442" stop-color="#ff4090"/><stop offset="0.506" stop-color="#ff2164"/><stop offset="0.603" stop-color="#ff0a40"/><stop offset="0.740" stop-color="#ff0026"/><stop offset="1.000" stop-color="#ff0011"/></linearGradient><linearGradient id="h32" gradientUnits="userSpaceOnUse" x1="1030.7" y1="0" x2="1650.7" y2="0"><stop offset="0.000" stop-color="#00ffef"/><stop offset="0.061" stop-color="#00fbff"/><stop offset="0.203" stop-color="#03c9ff"/><stop offset="0.245" stop-color="#2bb9ff"/><stop offset="0.300" stop-color="#7aa3ff"/><stop offset="0.358" stop-color="#e48cff"/><stop offset="0.371" stop-color="#fe87ff"/><stop offset="0.406" stop-color="#ff5cc3"/><stop offset="0.452" stop-color="#ff3992"/><stop offset="0.516" stop-color="#ff1d67"/><stop offset="0.616" stop-color="#ff0842"/><stop offset="0.755" stop-color="#ff0027"/><stop offset="1.000" stop-color="#ff0012"/></linearGradient><linearGradient id="h33" gradientUnits="userSpaceOnUse" x1="1032.7" y1="0" x2="1646.7" y2="0"><stop offset="0.000" stop-color="#00fffe"/><stop offset="0.202" stop-color="#02bcff"/><stop offset="0.244" stop-color="#28adff"/><stop offset="0.300" stop-color="#7298ff"/><stop offset="0.362" stop-color="#dc80ff"/><stop offset="0.378" stop-color="#fc7aff"/><stop offset="0.420" stop-color="#ff4ebe"/><stop offset="0.469" stop-color="#ff2f8d"/><stop offset="0.541" stop-color="#ff1562"/><stop offset="0.648" stop-color="#ff043f"/><stop offset="0.831" stop-color="#ff0022"/><stop offset="1.000" stop-color="#ff0014"/></linearGradient><linearGradient id="h34" gradientUnits="userSpaceOnUse" x1="1033.7" y1="0" x2="1641.7" y2="0"><stop offset="0.000" stop-color="#00f2ff"/><stop offset="0.204" stop-color="#02b0ff"/><stop offset="0.247" stop-color="#26a1ff"/><stop offset="0.306" stop-color="#718cff"/><stop offset="0.368" stop-color="#d875ff"/><stop offset="0.388" stop-color="#fd6dff"/><stop offset="0.431" stop-color="#ff46bf"/><stop offset="0.480" stop-color="#ff2a8f"/><stop offset="0.553" stop-color="#ff1264"/><stop offset="0.664" stop-color="#ff0240"/><stop offset="0.852" stop-color="#ff0022"/><stop offset="1.000" stop-color="#ff0017"/></linearGradient><linearGradient id="h35" gradientUnits="userSpaceOnUse" x1="1035.7" y1="0" x2="1637.7" y2="0"><stop offset="0.000" stop-color="#00e5ff"/><stop offset="0.206" stop-color="#03a4ff"/><stop offset="0.252" stop-color="#2a95ff"/><stop offset="0.316" stop-color="#787fff"/><stop offset="0.382" stop-color="#e367ff"/><stop offset="0.399" stop-color="#ff61fd"/><stop offset="0.435" stop-color="#ff41c6"/><stop offset="0.485" stop-color="#ff2795"/><stop offset="0.558" stop-color="#ff1069"/><stop offset="0.668" stop-color="#ff0144"/><stop offset="0.850" stop-color="#ff0026"/><stop offset="1.000" stop-color="#ff0019"/></linearGradient><linearGradient id="h36" gradientUnits="userSpaceOnUse" x1="1036.7" y1="0" x2="1634.7" y2="0"><stop offset="0.000" stop-color="#00d9ff"/><stop offset="0.207" stop-color="#039aff"/><stop offset="0.258" stop-color="#2b8aff"/><stop offset="0.321" stop-color="#7875ff"/><stop offset="0.391" stop-color="#e55dff"/><stop offset="0.408" stop-color="#ff56fc"/><stop offset="0.448" stop-color="#ff38c3"/><stop offset="0.502" stop-color="#ff1f91"/><stop offset="0.579" stop-color="#ff0c66"/><stop offset="0.696" stop-color="#ff0042"/><stop offset="0.890" stop-color="#ff0024"/><stop offset="1.000" stop-color="#ff001b"/></linearGradient><linearGradient id="h37" gradientUnits="userSpaceOnUse" x1="1038.7" y1="0" x2="1630.7" y2="0"><stop offset="0.000" stop-color="#00cdff"/><stop offset="0.206" stop-color="#0291ff"/><stop offset="0.257" stop-color="#2881ff"/><stop offset="0.324" stop-color="#756cff"/><stop offset="0.395" stop-color="#de55ff"/><stop offset="0.416" stop-color="#ff4efe"/><stop offset="0.456" stop-color="#ff33c6"/><stop offset="0.510" stop-color="#ff1c94"/><stop offset="0.588" stop-color="#ff0a69"/><stop offset="0.706" stop-color="#ff0044"/><stop offset="0.902" stop-color="#ff0026"/><stop offset="1.000" stop-color="#ff001d"/></linearGradient><linearGradient id="h38" gradientUnits="userSpaceOnUse" x1="1039.7" y1="0" x2="1627.7" y2="0"><stop offset="0.000" stop-color="#00c2ff"/><stop offset="0.207" stop-color="#0288ff"/><stop offset="0.259" stop-color="#2779ff"/><stop offset="0.327" stop-color="#7164ff"/><stop offset="0.401" stop-color="#da4dff"/><stop offset="0.425" stop-color="#ff45fe"/><stop offset="0.466" stop-color="#ff2cc7"/><stop offset="0.524" stop-color="#ff1794"/><stop offset="0.605" stop-color="#ff0768"/><stop offset="0.728" stop-color="#ff0044"/><stop offset="0.932" stop-color="#ff0026"/><stop offset="1.000" stop-color="#ff0020"/></linearGradient><linearGradient id="h39" gradientUnits="userSpaceOnUse" x1="1041.7" y1="0" x2="1623.7" y2="0"><stop offset="0.000" stop-color="#00b8ff"/><stop offset="0.210" stop-color="#027fff"/><stop offset="0.265" stop-color="#2a6fff"/><stop offset="0.337" stop-color="#775aff"/><stop offset="0.416" stop-color="#e443ff"/><stop offset="0.433" stop-color="#fe3eff"/><stop offset="0.478" stop-color="#ff26c5"/><stop offset="0.536" stop-color="#ff1394"/><stop offset="0.622" stop-color="#ff0468"/><stop offset="0.753" stop-color="#ff0043"/><stop offset="0.969" stop-color="#ff0025"/><stop offset="1.000" stop-color="#ff0022"/></linearGradient><linearGradient id="h40" gradientUnits="userSpaceOnUse" x1="1042.7" y1="0" x2="1618.7" y2="0"><stop offset="0.000" stop-color="#00afff"/><stop offset="0.212" stop-color="#0277ff"/><stop offset="0.267" stop-color="#2868ff"/><stop offset="0.344" stop-color="#7753ff"/><stop offset="0.424" stop-color="#e03dff"/><stop offset="0.444" stop-color="#ff37ff"/><stop offset="0.490" stop-color="#ff21c6"/><stop offset="0.552" stop-color="#ff0f94"/><stop offset="0.639" stop-color="#ff0269"/><stop offset="0.771" stop-color="#ff0044"/><stop offset="0.990" stop-color="#ff0026"/><stop offset="1.000" stop-color="#ff0025"/></linearGradient><linearGradient id="h41" gradientUnits="userSpaceOnUse" x1="1044.7" y1="0" x2="1614.7" y2="0"><stop offset="0.000" stop-color="#00a6ff"/><stop offset="0.214" stop-color="#0370ff"/><stop offset="0.274" stop-color="#2b60ff"/><stop offset="0.351" stop-color="#784bff"/><stop offset="0.435" stop-color="#e435ff"/><stop offset="0.456" stop-color="#ff2ffc"/><stop offset="0.505" stop-color="#ff1bc2"/><stop offset="0.572" stop-color="#ff0a90"/><stop offset="0.667" stop-color="#ff0065"/><stop offset="0.811" stop-color="#ff0040"/><stop offset="1.000" stop-color="#ff0028"/></linearGradient><linearGradient id="h42" gradientUnits="userSpaceOnUse" x1="1046.7" y1="0" x2="1610.7" y2="0"><stop offset="0.000" stop-color="#009dff"/><stop offset="0.213" stop-color="#0269ff"/><stop offset="0.273" stop-color="#295aff"/><stop offset="0.355" stop-color="#7645ff"/><stop offset="0.440" stop-color="#de30ff"/><stop offset="0.465" stop-color="#ff2afd"/><stop offset="0.514" stop-color="#ff17c4"/><stop offset="0.582" stop-color="#ff0892"/><stop offset="0.677" stop-color="#ff0067"/><stop offset="0.823" stop-color="#ff0042"/><stop offset="1.000" stop-color="#ff002b"/></linearGradient><linearGradient id="h43" gradientUnits="userSpaceOnUse" x1="1047.7" y1="0" x2="1607.7" y2="0"><stop offset="0.000" stop-color="#0095ff"/><stop offset="0.214" stop-color="#0263ff"/><stop offset="0.279" stop-color="#2a53ff"/><stop offset="0.361" stop-color="#763fff"/><stop offset="0.450" stop-color="#e02aff"/><stop offset="0.475" stop-color="#ff24fd"/><stop offset="0.525" stop-color="#ff13c5"/><stop offset="0.593" stop-color="#ff0694"/><stop offset="0.693" stop-color="#ff0068"/><stop offset="0.843" stop-color="#ff0043"/><stop offset="1.000" stop-color="#ff002d"/></linearGradient><linearGradient id="h44" gradientUnits="userSpaceOnUse" x1="1049.7" y1="0" x2="1603.7" y2="0"><stop offset="0.000" stop-color="#008eff"/><stop offset="0.217" stop-color="#035dff"/><stop offset="0.282" stop-color="#2a4eff"/><stop offset="0.368" stop-color="#7739ff"/><stop offset="0.462" stop-color="#e324ff"/><stop offset="0.484" stop-color="#ff1fff"/><stop offset="0.534" stop-color="#ff10c7"/><stop offset="0.606" stop-color="#ff0494"/><stop offset="0.708" stop-color="#ff0069"/><stop offset="0.863" stop-color="#ff0043"/><stop offset="1.000" stop-color="#ff0030"/></linearGradient><linearGradient id="h45" gradientUnits="userSpaceOnUse" x1="1051.7" y1="0" x2="1599.7" y2="0"><stop offset="0.000" stop-color="#0087ff"/><stop offset="0.215" stop-color="#0258ff"/><stop offset="0.281" stop-color="#2749ff"/><stop offset="0.369" stop-color="#7235ff"/><stop offset="0.464" stop-color="#d921ff"/><stop offset="0.493" stop-color="#fe1bff"/><stop offset="0.551" stop-color="#ff0cc3"/><stop offset="0.628" stop-color="#ff0191"/><stop offset="0.737" stop-color="#ff0065"/><stop offset="0.905" stop-color="#ff0040"/><stop offset="1.000" stop-color="#ff0034"/></linearGradient><linearGradient id="h46" gradientUnits="userSpaceOnUse" x1="1053.7" y1="0" x2="1595.7" y2="0"><stop offset="0.000" stop-color="#0080ff"/><stop offset="0.218" stop-color="#0352ff"/><stop offset="0.288" stop-color="#2a43ff"/><stop offset="0.380" stop-color="#772fff"/><stop offset="0.480" stop-color="#e11bff"/><stop offset="0.506" stop-color="#ff16fd"/><stop offset="0.561" stop-color="#ff09c6"/><stop offset="0.638" stop-color="#ff0093"/><stop offset="0.749" stop-color="#ff0067"/><stop offset="0.915" stop-color="#ff0043"/><stop offset="1.000" stop-color="#ff0037"/></linearGradient><linearGradient id="h47" gradientUnits="userSpaceOnUse" x1="1054.7" y1="0" x2="1590.7" y2="0"><stop offset="0.000" stop-color="#007aff"/><stop offset="0.220" stop-color="#034dff"/><stop offset="0.295" stop-color="#2b3eff"/><stop offset="0.392" stop-color="#7a2aff"/><stop offset="0.496" stop-color="#e716ff"/><stop offset="0.519" stop-color="#ff12fd"/><stop offset="0.578" stop-color="#ff06c3"/><stop offset="0.660" stop-color="#ff0091"/><stop offset="0.776" stop-color="#ff0066"/><stop offset="0.951" stop-color="#ff0041"/><stop offset="1.000" stop-color="#ff003b"/></linearGradient><linearGradient id="h48" gradientUnits="userSpaceOnUse" x1="1056.7" y1="0" x2="1588.7" y2="0"><stop offset="0.000" stop-color="#0073ff"/><stop offset="0.218" stop-color="#0249ff"/><stop offset="0.293" stop-color="#293aff"/><stop offset="0.391" stop-color="#7527ff"/><stop offset="0.496" stop-color="#de14ff"/><stop offset="0.526" stop-color="#ff0ffe"/><stop offset="0.586" stop-color="#ff04c5"/><stop offset="0.669" stop-color="#ff0093"/><stop offset="0.786" stop-color="#ff0068"/><stop offset="0.962" stop-color="#ff0043"/><stop offset="1.000" stop-color="#ff003e"/></linearGradient><linearGradient id="h49" gradientUnits="userSpaceOnUse" x1="1058.7" y1="0" x2="1584.7" y2="0"><stop offset="0.000" stop-color="#006eff"/><stop offset="0.221" stop-color="#0344ff"/><stop offset="0.300" stop-color="#2b35ff"/><stop offset="0.403" stop-color="#7a22ff"/><stop offset="0.513" stop-color="#e50fff"/><stop offset="0.540" stop-color="#ff0bfc"/><stop offset="0.601" stop-color="#ff02c5"/><stop offset="0.684" stop-color="#ff0093"/><stop offset="0.806" stop-color="#ff0067"/><stop offset="0.992" stop-color="#ff0042"/><stop offset="1.000" stop-color="#ff0041"/></linearGradient><linearGradient id="h50" gradientUnits="userSpaceOnUse" x1="1060.7" y1="0" x2="1580.7" y2="0"><stop offset="0.000" stop-color="#0068ff"/><stop offset="0.223" stop-color="#0340ff"/><stop offset="0.304" stop-color="#2b31ff"/><stop offset="0.412" stop-color="#7b1eff"/><stop offset="0.527" stop-color="#e80cff"/><stop offset="0.550" stop-color="#ff08fd"/><stop offset="0.615" stop-color="#ff00c4"/><stop offset="0.704" stop-color="#ff0092"/><stop offset="0.831" stop-color="#ff0066"/><stop offset="1.000" stop-color="#ff0045"/></linearGradient><linearGradient id="h51" gradientUnits="userSpaceOnUse" x1="1062.7" y1="0" x2="1576.7" y2="0"><stop offset="0.000" stop-color="#0063ff"/><stop offset="0.222" stop-color="#023cff"/><stop offset="0.304" stop-color="#292eff"/><stop offset="0.412" stop-color="#761cff"/><stop offset="0.529" stop-color="#df0aff"/><stop offset="0.560" stop-color="#ff06ff"/><stop offset="0.626" stop-color="#ff00c6"/><stop offset="0.716" stop-color="#ff0094"/><stop offset="0.844" stop-color="#ff0068"/><stop offset="1.000" stop-color="#ff0049"/></linearGradient><linearGradient id="h52" gradientUnits="userSpaceOnUse" x1="1064.7" y1="0" x2="1572.7" y2="0"><stop offset="0.000" stop-color="#005eff"/><stop offset="0.224" stop-color="#0338ff"/><stop offset="0.311" stop-color="#2c2aff"/><stop offset="0.425" stop-color="#7a18ff"/><stop offset="0.547" stop-color="#e606ff"/><stop offset="0.575" stop-color="#ff03fc"/><stop offset="0.646" stop-color="#ff00c3"/><stop offset="0.740" stop-color="#ff0091"/><stop offset="0.878" stop-color="#ff0065"/><stop offset="1.000" stop-color="#ff004d"/></linearGradient><linearGradient id="h53" gradientUnits="userSpaceOnUse" x1="1066.7" y1="0" x2="1568.7" y2="0"><stop offset="0.000" stop-color="#0059ff"/><stop offset="0.223" stop-color="#0235ff"/><stop offset="0.311" stop-color="#2927ff"/><stop offset="0.426" stop-color="#7516ff"/><stop offset="0.554" stop-color="#e205ff"/><stop offset="0.586" stop-color="#ff02fe"/><stop offset="0.657" stop-color="#ff00c4"/><stop offset="0.753" stop-color="#ff0093"/><stop offset="0.892" stop-color="#ff0067"/><stop offset="1.000" stop-color="#ff0051"/></linearGradient><linearGradient id="h54" gradientUnits="userSpaceOnUse" x1="1068.7" y1="0" x2="1564.7" y2="0"><stop offset="0.000" stop-color="#0055ff"/><stop offset="0.226" stop-color="#0331ff"/><stop offset="0.319" stop-color="#2c23ff"/><stop offset="0.440" stop-color="#7a12ff"/><stop offset="0.569" stop-color="#e502ff"/><stop offset="0.597" stop-color="#ff00ff"/><stop offset="0.669" stop-color="#ff00c6"/><stop offset="0.770" stop-color="#ff0093"/><stop offset="0.911" stop-color="#ff0068"/><stop offset="1.000" stop-color="#ff0056"/></linearGradient><linearGradient id="h55" gradientUnits="userSpaceOnUse" x1="1070.7" y1="0" x2="1560.7" y2="0"><stop offset="0.000" stop-color="#0050ff"/><stop offset="0.224" stop-color="#022fff"/><stop offset="0.318" stop-color="#2921ff"/><stop offset="0.445" stop-color="#7810ff"/><stop offset="0.580" stop-color="#e401ff"/><stop offset="0.612" stop-color="#ff00fd"/><stop offset="0.690" stop-color="#ff00c3"/><stop offset="0.796" stop-color="#ff0091"/><stop offset="0.947" stop-color="#ff0065"/><stop offset="1.000" stop-color="#ff005b"/></linearGradient><linearGradient id="h56" gradientUnits="userSpaceOnUse" x1="1072.7" y1="0" x2="1556.7" y2="0"><stop offset="0.000" stop-color="#004cff"/><stop offset="0.227" stop-color="#032bff"/><stop offset="0.326" stop-color="#2c1eff"/><stop offset="0.455" stop-color="#790dff"/><stop offset="0.595" stop-color="#e700ff"/><stop offset="0.624" stop-color="#ff00fe"/><stop offset="0.702" stop-color="#ff00c5"/><stop offset="0.810" stop-color="#ff0092"/><stop offset="0.963" stop-color="#ff0067"/><stop offset="1.000" stop-color="#ff005f"/></linearGradient><linearGradient id="h57" gradientUnits="userSpaceOnUse" x1="1074.7" y1="0" x2="1552.7" y2="0"><stop offset="0.000" stop-color="#0048ff"/><stop offset="0.226" stop-color="#0229ff"/><stop offset="0.326" stop-color="#291cff"/><stop offset="0.460" stop-color="#780bff"/><stop offset="0.603" stop-color="#e200ff"/><stop offset="0.640" stop-color="#ff00fc"/><stop offset="0.720" stop-color="#ff00c4"/><stop offset="0.828" stop-color="#ff0093"/><stop offset="0.987" stop-color="#ff0067"/><stop offset="1.000" stop-color="#ff0064"/></linearGradient><linearGradient id="h58" gradientUnits="userSpaceOnUse" x1="1076.7" y1="0" x2="1548.7" y2="0"><stop offset="0.000" stop-color="#0045ff"/><stop offset="0.229" stop-color="#0326ff"/><stop offset="0.335" stop-color="#2c19ff"/><stop offset="0.475" stop-color="#7c08ff"/><stop offset="0.623" stop-color="#e800ff"/><stop offset="0.653" stop-color="#ff00fd"/><stop offset="0.737" stop-color="#ff00c4"/><stop offset="0.852" stop-color="#ff0092"/><stop offset="1.000" stop-color="#ff0069"/></linearGradient><linearGradient id="h59" gradientUnits="userSpaceOnUse" x1="1078.7" y1="0" x2="1544.7" y2="0"><stop offset="0.000" stop-color="#0041ff"/><stop offset="0.232" stop-color="#0323ff"/><stop offset="0.343" stop-color="#2e16ff"/><stop offset="0.485" stop-color="#7d06ff"/><stop offset="0.639" stop-color="#eb00ff"/><stop offset="0.670" stop-color="#ff00fb"/><stop offset="0.755" stop-color="#ff00c3"/><stop offset="0.876" stop-color="#ff0091"/><stop offset="1.000" stop-color="#ff006f"/></linearGradient><linearGradient id="h60" gradientUnits="userSpaceOnUse" x1="1080.7" y1="0" x2="1540.7" y2="0"><stop offset="0.000" stop-color="#003eff"/><stop offset="0.230" stop-color="#0321ff"/><stop offset="0.343" stop-color="#2c14ff"/><stop offset="0.491" stop-color="#7b05ff"/><stop offset="0.648" stop-color="#e700ff"/><stop offset="0.683" stop-color="#ff00fc"/><stop offset="0.770" stop-color="#ff00c5"/><stop offset="0.891" stop-color="#ff0092"/><stop offset="1.000" stop-color="#ff0074"/></linearGradient><linearGradient id="h61" gradientUnits="userSpaceOnUse" x1="1082.7" y1="0" x2="1536.7" y2="0"><stop offset="0.000" stop-color="#003aff"/><stop offset="0.233" stop-color="#031fff"/><stop offset="0.348" stop-color="#2c12ff"/><stop offset="0.498" stop-color="#7904ff"/><stop offset="0.661" stop-color="#e600ff"/><stop offset="0.696" stop-color="#ff00fd"/><stop offset="0.789" stop-color="#ff00c4"/><stop offset="0.916" stop-color="#ff0091"/><stop offset="1.000" stop-color="#ff007a"/></linearGradient><linearGradient id="h62" gradientUnits="userSpaceOnUse" x1="1085.7" y1="0" x2="1533.7" y2="0"><stop offset="0.000" stop-color="#0037ff"/><stop offset="0.232" stop-color="#031dff"/><stop offset="0.353" stop-color="#2d10ff"/><stop offset="0.509" stop-color="#7c02ff"/><stop offset="0.674" stop-color="#e700ff"/><stop offset="0.710" stop-color="#ff00fd"/><stop offset="0.804" stop-color="#ff00c5"/><stop offset="0.933" stop-color="#ff0092"/><stop offset="1.000" stop-color="#ff0080"/></linearGradient><linearGradient id="h63" gradientUnits="userSpaceOnUse" x1="1087.7" y1="0" x2="1529.7" y2="0"><stop offset="0.000" stop-color="#0034ff"/><stop offset="0.231" stop-color="#031bff"/><stop offset="0.353" stop-color="#2b0eff"/><stop offset="0.516" stop-color="#7a01ff"/><stop offset="0.688" stop-color="#e600ff"/><stop offset="0.724" stop-color="#ff00fe"/><stop offset="0.819" stop-color="#ff00c6"/><stop offset="0.950" stop-color="#ff0094"/><stop offset="1.000" stop-color="#ff0086"/></linearGradient><linearGradient id="h64" gradientUnits="userSpaceOnUse" x1="1089.7" y1="0" x2="1525.7" y2="0"><stop offset="0.000" stop-color="#0031ff"/><stop offset="0.234" stop-color="#0319ff"/><stop offset="0.362" stop-color="#2c0cff"/><stop offset="0.528" stop-color="#7b00ff"/><stop offset="0.706" stop-color="#e900ff"/><stop offset="0.743" stop-color="#ff00fc"/><stop offset="0.844" stop-color="#ff00c3"/><stop offset="0.982" stop-color="#ff0091"/><stop offset="1.000" stop-color="#ff008c"/></linearGradient><linearGradient id="h65" gradientUnits="userSpaceOnUse" x1="1092.7" y1="0" x2="1520.7" y2="0"><stop offset="0.000" stop-color="#002eff"/><stop offset="0.234" stop-color="#0317ff"/><stop offset="0.364" stop-color="#2c0bff"/><stop offset="0.537" stop-color="#7b00ff"/><stop offset="0.720" stop-color="#e600ff"/><stop offset="0.762" stop-color="#ff00fc"/><stop offset="0.864" stop-color="#ff00c4"/><stop offset="1.000" stop-color="#ff0094"/></linearGradient><linearGradient id="h66" gradientUnits="userSpaceOnUse" x1="1094.7" y1="0" x2="1516.7" y2="0"><stop offset="0.000" stop-color="#002cff"/><stop offset="0.232" stop-color="#0215ff"/><stop offset="0.365" stop-color="#2a0aff"/><stop offset="0.540" stop-color="#7700ff"/><stop offset="0.730" stop-color="#e300ff"/><stop offset="0.777" stop-color="#ff00fd"/><stop offset="0.886" stop-color="#ff00c3"/><stop offset="1.000" stop-color="#ff009b"/></linearGradient><linearGradient id="h67" gradientUnits="userSpaceOnUse" x1="1096.7" y1="0" x2="1512.7" y2="0"><stop offset="0.000" stop-color="#0029ff"/><stop offset="0.236" stop-color="#0313ff"/><stop offset="0.375" stop-color="#2c08ff"/><stop offset="0.558" stop-color="#7b00ff"/><stop offset="0.755" stop-color="#e800ff"/><stop offset="0.793" stop-color="#ff00fe"/><stop offset="0.904" stop-color="#ff00c5"/><stop offset="1.000" stop-color="#ff00a2"/></linearGradient><linearGradient id="h68" gradientUnits="userSpaceOnUse" x1="1099.7" y1="0" x2="1509.7" y2="0"><stop offset="0.000" stop-color="#0026ff"/><stop offset="0.234" stop-color="#0312ff"/><stop offset="0.380" stop-color="#2c06ff"/><stop offset="0.571" stop-color="#7d00ff"/><stop offset="0.771" stop-color="#e900ff"/><stop offset="0.810" stop-color="#ff00fe"/><stop offset="0.922" stop-color="#ff00c5"/><stop offset="1.000" stop-color="#ff00a9"/></linearGradient><linearGradient id="h69" gradientUnits="userSpaceOnUse" x1="1101.7" y1="0" x2="1505.7" y2="0"><stop offset="0.000" stop-color="#0024ff"/><stop offset="0.238" stop-color="#0310ff"/><stop offset="0.386" stop-color="#2c05ff"/><stop offset="0.579" stop-color="#7b00ff"/><stop offset="0.787" stop-color="#e800ff"/><stop offset="0.832" stop-color="#ff00fc"/><stop offset="0.950" stop-color="#ff00c3"/><stop offset="1.000" stop-color="#ff00b1"/></linearGradient><linearGradient id="h70" gradientUnits="userSpaceOnUse" x1="1103.7" y1="0" x2="1501.7" y2="0"><stop offset="0.000" stop-color="#0022ff"/><stop offset="0.236" stop-color="#030fff"/><stop offset="0.387" stop-color="#2b04ff"/><stop offset="0.588" stop-color="#7a00ff"/><stop offset="0.804" stop-color="#e700ff"/><stop offset="0.849" stop-color="#ff00fd"/><stop offset="0.970" stop-color="#ff00c4"/><stop offset="1.000" stop-color="#ff00b9"/></linearGradient><linearGradient id="h71" gradientUnits="userSpaceOnUse" x1="1106.7" y1="0" x2="1498.7" y2="0"><stop offset="0.000" stop-color="#0020ff"/><stop offset="0.235" stop-color="#030dff"/><stop offset="0.393" stop-color="#2c03ff"/><stop offset="0.597" stop-color="#7a00ff"/><stop offset="0.816" stop-color="#e500ff"/><stop offset="0.867" stop-color="#ff00fc"/><stop offset="0.995" stop-color="#ff00c3"/><stop offset="1.000" stop-color="#ff00c1"/></linearGradient><linearGradient id="h72" gradientUnits="userSpaceOnUse" x1="1108.7" y1="0" x2="1494.7" y2="0"><stop offset="0.000" stop-color="#001eff"/><stop offset="0.238" stop-color="#030cff"/><stop offset="0.404" stop-color="#2d02ff"/><stop offset="0.617" stop-color="#7d00ff"/><stop offset="0.845" stop-color="#ea00ff"/><stop offset="0.886" stop-color="#ff00fe"/><stop offset="1.000" stop-color="#ff00ca"/></linearGradient><linearGradient id="h73" gradientUnits="userSpaceOnUse" x1="1110.7" y1="0" x2="1490.7" y2="0"><stop offset="0.000" stop-color="#001cff"/><stop offset="0.237" stop-color="#030bff"/><stop offset="0.405" stop-color="#2c01ff"/><stop offset="0.626" stop-color="#7b00ff"/><stop offset="0.863" stop-color="#e900ff"/><stop offset="0.911" stop-color="#ff00fc"/><stop offset="1.000" stop-color="#ff00d3"/></linearGradient><linearGradient id="h74" gradientUnits="userSpaceOnUse" x1="1113.7" y1="0" x2="1485.7" y2="0"><stop offset="0.000" stop-color="#001aff"/><stop offset="0.242" stop-color="#0309ff"/><stop offset="0.419" stop-color="#2e00ff"/><stop offset="0.645" stop-color="#7d00ff"/><stop offset="0.887" stop-color="#ea00ff"/><stop offset="0.935" stop-color="#ff00fb"/><stop offset="1.000" stop-color="#ff00de"/></linearGradient><linearGradient id="h75" gradientUnits="userSpaceOnUse" x1="1115.7" y1="0" x2="1481.7" y2="0"><stop offset="0.000" stop-color="#0018ff"/><stop offset="0.240" stop-color="#0309ff"/><stop offset="0.421" stop-color="#2c00ff"/><stop offset="0.656" stop-color="#7c00ff"/><stop offset="0.907" stop-color="#e900ff"/><stop offset="0.956" stop-color="#ff00fc"/><stop offset="1.000" stop-color="#ff00e8"/></linearGradient><linearGradient id="h76" gradientUnits="userSpaceOnUse" x1="1118.7" y1="0" x2="1478.7" y2="0"><stop offset="0.000" stop-color="#0016ff"/><stop offset="0.239" stop-color="#0308ff"/><stop offset="0.422" stop-color="#2c00ff"/><stop offset="0.661" stop-color="#7a00ff"/><stop offset="0.922" stop-color="#e700ff"/><stop offset="0.978" stop-color="#ff00fc"/><stop offset="1.000" stop-color="#ff00f2"/></linearGradient><linearGradient id="h77" gradientUnits="userSpaceOnUse" x1="1120.7" y1="0" x2="1474.7" y2="0"><stop offset="0.000" stop-color="#0015ff"/><stop offset="0.243" stop-color="#0306ff"/><stop offset="0.435" stop-color="#2d00ff"/><stop offset="0.684" stop-color="#7d00ff"/><stop offset="0.949" stop-color="#e900ff"/><stop offset="1.000" stop-color="#ff00fd"/></linearGradient><linearGradient id="h78" gradientUnits="userSpaceOnUse" x1="1123.7" y1="0" x2="1469.7" y2="0"><stop offset="0.000" stop-color="#0013ff"/><stop offset="0.243" stop-color="#0306ff"/><stop offset="0.445" stop-color="#2e00ff"/><stop offset="0.705" stop-color="#7f00ff"/><stop offset="0.983" stop-color="#ed00ff"/><stop offset="1.000" stop-color="#f400ff"/></linearGradient><linearGradient id="h79" gradientUnits="userSpaceOnUse" x1="1125.7" y1="0" x2="1465.7" y2="0"><stop offset="0.000" stop-color="#0011ff"/><stop offset="0.241" stop-color="#0305ff"/><stop offset="0.447" stop-color="#2c00ff"/><stop offset="0.712" stop-color="#7b00ff"/><stop offset="0.994" stop-color="#e700ff"/><stop offset="1.000" stop-color="#e900ff"/></linearGradient><linearGradient id="h80" gradientUnits="userSpaceOnUse" x1="1128.7" y1="0" x2="1462.7" y2="0"><stop offset="0.000" stop-color="#0010ff"/><stop offset="0.240" stop-color="#0304ff"/><stop offset="0.449" stop-color="#2c00ff"/><stop offset="0.725" stop-color="#7b00ff"/><stop offset="1.000" stop-color="#e000ff"/></linearGradient><linearGradient id="h81" gradientUnits="userSpaceOnUse" x1="1131.7" y1="0" x2="1457.7" y2="0"><stop offset="0.000" stop-color="#000eff"/><stop offset="0.239" stop-color="#0303ff"/><stop offset="0.460" stop-color="#2c00ff"/><stop offset="0.748" stop-color="#7d00ff"/><stop offset="1.000" stop-color="#d500ff"/></linearGradient><linearGradient id="h82" gradientUnits="userSpaceOnUse" x1="1133.7" y1="0" x2="1455.7" y2="0"><stop offset="0.000" stop-color="#000dff"/><stop offset="0.242" stop-color="#0302ff"/><stop offset="0.466" stop-color="#2c00ff"/><stop offset="0.758" stop-color="#7c00ff"/><stop offset="1.000" stop-color="#ce00ff"/></linearGradient><linearGradient id="h83" gradientUnits="userSpaceOnUse" x1="1136.7" y1="0" x2="1450.7" y2="0"><stop offset="0.000" stop-color="#000cff"/><stop offset="0.242" stop-color="#0302ff"/><stop offset="0.478" stop-color="#2d00ff"/><stop offset="0.783" stop-color="#7d00ff"/><stop offset="1.000" stop-color="#c400ff"/></linearGradient><linearGradient id="h84" gradientUnits="userSpaceOnUse" x1="1139.7" y1="0" x2="1447.7" y2="0"><stop offset="0.000" stop-color="#000aff"/><stop offset="0.240" stop-color="#0301ff"/><stop offset="0.481" stop-color="#2c00ff"/><stop offset="0.792" stop-color="#7b00ff"/><stop offset="1.000" stop-color="#bc00ff"/></linearGradient><linearGradient id="h85" gradientUnits="userSpaceOnUse" x1="1141.7" y1="0" x2="1443.7" y2="0"><stop offset="0.000" stop-color="#0009ff"/><stop offset="0.245" stop-color="#0301ff"/><stop offset="0.497" stop-color="#2e00ff"/><stop offset="0.821" stop-color="#7e00ff"/><stop offset="1.000" stop-color="#b300ff"/></linearGradient><linearGradient id="h86" gradientUnits="userSpaceOnUse" x1="1144.7" y1="0" x2="1438.7" y2="0"><stop offset="0.000" stop-color="#0008ff"/><stop offset="0.245" stop-color="#0300ff"/><stop offset="0.503" stop-color="#2d00ff"/><stop offset="0.844" stop-color="#7e00ff"/><stop offset="1.000" stop-color="#aa00ff"/></linearGradient><linearGradient id="h87" gradientUnits="userSpaceOnUse" x1="1147.7" y1="0" x2="1435.7" y2="0"><stop offset="0.000" stop-color="#0007ff"/><stop offset="0.243" stop-color="#0300ff"/><stop offset="0.514" stop-color="#2e00ff"/><stop offset="0.861" stop-color="#7d00ff"/><stop offset="1.000" stop-color="#a400ff"/></linearGradient><linearGradient id="h88" gradientUnits="userSpaceOnUse" x1="1150.7" y1="0" x2="1430.7" y2="0"><stop offset="0.000" stop-color="#0006ff"/><stop offset="0.243" stop-color="#0300ff"/><stop offset="0.521" stop-color="#2d00ff"/><stop offset="0.886" stop-color="#7d00ff"/><stop offset="1.000" stop-color="#9b00ff"/></linearGradient><linearGradient id="h89" gradientUnits="userSpaceOnUse" x1="1153.7" y1="0" x2="1427.7" y2="0"><stop offset="0.000" stop-color="#0005ff"/><stop offset="0.241" stop-color="#0300ff"/><stop offset="0.533" stop-color="#2e00ff"/><stop offset="0.912" stop-color="#7f00ff"/><stop offset="1.000" stop-color="#9500ff"/></linearGradient><linearGradient id="h90" gradientUnits="userSpaceOnUse" x1="1156.7" y1="0" x2="1422.7" y2="0"><stop offset="0.000" stop-color="#0004ff"/><stop offset="0.241" stop-color="#0300ff"/><stop offset="0.541" stop-color="#2d00ff"/><stop offset="0.932" stop-color="#7d00ff"/><stop offset="1.000" stop-color="#8d00ff"/></linearGradient><linearGradient id="h91" gradientUnits="userSpaceOnUse" x1="1158.7" y1="0" x2="1418.7" y2="0"><stop offset="0.000" stop-color="#0003ff"/><stop offset="0.246" stop-color="#0400ff"/><stop offset="0.562" stop-color="#2e00ff"/><stop offset="0.969" stop-color="#7f00ff"/><stop offset="1.000" stop-color="#8600ff"/></linearGradient><linearGradient id="h92" gradientUnits="userSpaceOnUse" x1="1161.7" y1="0" x2="1415.7" y2="0"><stop offset="0.000" stop-color="#0003ff"/><stop offset="0.244" stop-color="#0300ff"/><stop offset="0.567" stop-color="#2e00ff"/><stop offset="0.984" stop-color="#7d00ff"/><stop offset="1.000" stop-color="#8100ff"/></linearGradient><linearGradient id="h93" gradientUnits="userSpaceOnUse" x1="1164.7" y1="0" x2="1412.7" y2="0"><stop offset="0.000" stop-color="#0002ff"/><stop offset="0.242" stop-color="#0300ff"/><stop offset="0.581" stop-color="#2e00ff"/><stop offset="1.000" stop-color="#7b00ff"/></linearGradient><linearGradient id="h94" gradientUnits="userSpaceOnUse" x1="1168.7" y1="0" x2="1408.7" y2="0"><stop offset="0.000" stop-color="#0001ff"/><stop offset="0.242" stop-color="#0400ff"/><stop offset="0.600" stop-color="#2f00ff"/><stop offset="1.000" stop-color="#7500ff"/></linearGradient><linearGradient id="h95" gradientUnits="userSpaceOnUse" x1="1171.7" y1="0" x2="1403.7" y2="0"><stop offset="0.000" stop-color="#0000ff"/><stop offset="0.241" stop-color="#0400ff"/><stop offset="0.612" stop-color="#2f00ff"/><stop offset="1.000" stop-color="#6f00ff"/></linearGradient><linearGradient id="h96" gradientUnits="userSpaceOnUse" x1="1174.7" y1="0" x2="1400.7" y2="0"><stop offset="0.000" stop-color="#0000ff"/><stop offset="0.239" stop-color="#0400ff"/><stop offset="0.619" stop-color="#2e00ff"/><stop offset="1.000" stop-color="#6a00ff"/></linearGradient><linearGradient id="h97" gradientUnits="userSpaceOnUse" x1="1177.7" y1="0" x2="1395.7" y2="0"><stop offset="0.000" stop-color="#0000ff"/><stop offset="0.248" stop-color="#0400ff"/><stop offset="0.661" stop-color="#3100ff"/><stop offset="1.000" stop-color="#6400ff"/></linearGradient><linearGradient id="h98" gradientUnits="userSpaceOnUse" x1="1180.7" y1="0" x2="1392.7" y2="0"><stop offset="0.000" stop-color="#0000ff"/><stop offset="0.245" stop-color="#0400ff"/><stop offset="0.670" stop-color="#3000ff"/><stop offset="1.000" stop-color="#6000ff"/></linearGradient><linearGradient id="h99" gradientUnits="userSpaceOnUse" x1="1184.7" y1="0" x2="1388.7" y2="0"><stop offset="0.000" stop-color="#0000ff"/><stop offset="0.245" stop-color="#0500ff"/><stop offset="0.696" stop-color="#3200ff"/><stop offset="1.000" stop-color="#5b00ff"/></linearGradient><linearGradient id="h100" gradientUnits="userSpaceOnUse" x1="1187.7" y1="0" x2="1383.7" y2="0"><stop offset="0.000" stop-color="#0000ff"/><stop offset="0.245" stop-color="#0500ff"/><stop offset="0.714" stop-color="#3100ff"/><stop offset="1.000" stop-color="#5500ff"/></linearGradient><linearGradient id="h101" gradientUnits="userSpaceOnUse" x1="1191.7" y1="0" x2="1379.7" y2="0"><stop offset="0.000" stop-color="#0000ff"/><stop offset="0.245" stop-color="#0500ff"/><stop offset="0.745" stop-color="#3200ff"/><stop offset="1.000" stop-color="#5100ff"/></linearGradient><linearGradient id="h102" gradientUnits="userSpaceOnUse" x1="1194.7" y1="0" x2="1376.7" y2="0"><stop offset="0.000" stop-color="#0000ff"/><stop offset="0.253" stop-color="#0500ff"/><stop offset="0.780" stop-color="#3400ff"/><stop offset="1.000" stop-color="#4d00ff"/></linearGradient><linearGradient id="h103" gradientUnits="userSpaceOnUse" x1="1198.7" y1="0" x2="1372.7" y2="0"><stop offset="0.000" stop-color="#0000ff"/><stop offset="0.253" stop-color="#0600ff"/><stop offset="0.816" stop-color="#3500ff"/><stop offset="1.000" stop-color="#4900ff"/></linearGradient><linearGradient id="h104" gradientUnits="userSpaceOnUse" x1="1202.7" y1="0" x2="1368.7" y2="0"><stop offset="0.000" stop-color="#0000ff"/><stop offset="0.265" stop-color="#0700ff"/><stop offset="0.867" stop-color="#3700ff"/><stop offset="1.000" stop-color="#4500ff"/></linearGradient><linearGradient id="h105" gradientUnits="userSpaceOnUse" x1="1206.7" y1="0" x2="1364.7" y2="0"><stop offset="0.000" stop-color="#0000ff"/><stop offset="0.291" stop-color="#0800ff"/><stop offset="0.949" stop-color="#3c00ff"/><stop offset="1.000" stop-color="#4100ff"/></linearGradient><linearGradient id="h106" gradientUnits="userSpaceOnUse" x1="1210.7" y1="0" x2="1360.7" y2="0"><stop offset="0.000" stop-color="#0000ff"/><stop offset="0.320" stop-color="#0a00ff"/><stop offset="1.000" stop-color="#3d00ff"/></linearGradient><linearGradient id="h107" gradientUnits="userSpaceOnUse" x1="1214.7" y1="0" x2="1356.7" y2="0"><stop offset="0.000" stop-color="#0000ff"/><stop offset="0.380" stop-color="#0d00ff"/><stop offset="1.000" stop-color="#3900ff"/></linearGradient><linearGradient id="h108" gradientUnits="userSpaceOnUse" x1="1219.7" y1="0" x2="1353.7" y2="0"><stop offset="0.000" stop-color="#0000ff"/><stop offset="0.478" stop-color="#1300ff"/><stop offset="1.000" stop-color="#3600ff"/></linearGradient><linearGradient id="h109" gradientUnits="userSpaceOnUse" x1="1223.7" y1="0" x2="1349.7" y2="0"><stop offset="0.000" stop-color="#0000ff"/><stop offset="0.587" stop-color="#1800ff"/><stop offset="1.000" stop-color="#3300ff"/></linearGradient><linearGradient id="h110" gradientUnits="userSpaceOnUse" x1="1228.7" y1="0" x2="1344.7" y2="0"><stop offset="0.000" stop-color="#0000ff"/><stop offset="0.741" stop-color="#2000ff"/><stop offset="1.000" stop-color="#2f00ff"/></linearGradient><linearGradient id="h111" gradientUnits="userSpaceOnUse" x1="1232.7" y1="0" x2="1340.7" y2="0"><stop offset="0.000" stop-color="#0100ff"/><stop offset="0.833" stop-color="#2300ff"/><stop offset="1.000" stop-color="#2c00ff"/></linearGradient><linearGradient id="h112" gradientUnits="userSpaceOnUse" x1="1237.7" y1="0" x2="1337.7" y2="0"><stop offset="0.000" stop-color="#0100ff"/><stop offset="0.960" stop-color="#2700ff"/><stop offset="1.000" stop-color="#2900ff"/></linearGradient><linearGradient id="h113" gradientUnits="userSpaceOnUse" x1="1242.7" y1="0" x2="1332.7" y2="0"><stop offset="0.000" stop-color="#0200ff"/><stop offset="1.000" stop-color="#2600ff"/></linearGradient><linearGradient id="h114" gradientUnits="userSpaceOnUse" x1="1247.7" y1="0" x2="1329.7" y2="0"><stop offset="0.000" stop-color="#0300ff"/><stop offset="1.000" stop-color="#2300ff"/></linearGradient><linearGradient id="h115" gradientUnits="userSpaceOnUse" x1="1252.7" y1="0" x2="1324.7" y2="0"><stop offset="0.000" stop-color="#0400ff"/><stop offset="1.000" stop-color="#2000ff"/></linearGradient><linearGradient id="h116" gradientUnits="userSpaceOnUse" x1="1257.7" y1="0" x2="1321.7" y2="0"><stop offset="0.000" stop-color="#0600ff"/><stop offset="1.000" stop-color="#1e00ff"/></linearGradient><linearGradient id="h117" gradientUnits="userSpaceOnUse" x1="1261.7" y1="0" x2="1317.7" y2="0"><stop offset="0.000" stop-color="#0600ff"/><stop offset="1.000" stop-color="#1b00ff"/></linearGradient><linearGradient id="h118" gradientUnits="userSpaceOnUse" x1="1266.7" y1="0" x2="1314.7" y2="0"><stop offset="0.000" stop-color="#0800ff"/><stop offset="1.000" stop-color="#1900ff"/></linearGradient><linearGradient id="h119" gradientUnits="userSpaceOnUse" x1="1271.7" y1="0" x2="1309.7" y2="0"><stop offset="0.000" stop-color="#0900ff"/><stop offset="1.000" stop-color="#1700ff"/></linearGradient><linearGradient id="h120" gradientUnits="userSpaceOnUse" x1="1276.7" y1="0" x2="1306.7" y2="0"><stop offset="0.000" stop-color="#0a00ff"/><stop offset="1.000" stop-color="#1500ff"/></linearGradient><linearGradient id="h121" gradientUnits="userSpaceOnUse" x1="1282.7" y1="0" x2="1302.7" y2="0"><stop offset="0.000" stop-color="#0c00ff"/><stop offset="1.000" stop-color="#1300ff"/></linearGradient><linearGradient id="rbr" x1="0" y1="0" x2="0" y2="1"><stop offset="0" stop-color="#ff5c5c"/><stop offset="1" stop-color="#f04040"/></linearGradient><linearGradient id="rbg" x1="0" y1="0" x2="0" y2="1"><stop offset="0" stop-color="#5cb05c"/><stop offset="1" stop-color="#228f22"/></linearGradient><linearGradient id="rbb" x1="0" y1="0" x2="0" y2="1"><stop offset="0" stop-color="#5a5aff"/><stop offset="1" stop-color="#1414ff"/></linearGradient><clipPath id="xyclip"><rect x="639.8" y="678.8" width="340.5" height="197.5"/></clipPath><linearGradient id="x0" gradientUnits="userSpaceOnUse" x1="633.8" y1="0" x2="987.8" y2="0"><stop offset="0.000" stop-color="#78ffc3"/><stop offset="0.729" stop-color="#f4ffba"/><stop offset="0.808" stop-color="#fffbb6"/><stop offset="1.000" stop-color="#ffda9a"/></linearGradient><linearGradient id="x1" gradientUnits="userSpaceOnUse" x1="633.8" y1="0" x2="987.8" y2="0"><stop offset="0.000" stop-color="#7affc6"/><stop offset="0.723" stop-color="#f6ffbe"/><stop offset="0.797" stop-color="#fffab9"/><stop offset="1.000" stop-color="#ffd79b"/></linearGradient><linearGradient id="x2" gradientUnits="userSpaceOnUse" x1="633.8" y1="0" x2="987.8" y2="0"><stop offset="0.000" stop-color="#7cffc9"/><stop offset="0.718" stop-color="#f8ffc1"/><stop offset="0.780" stop-color="#fffabd"/><stop offset="1.000" stop-color="#ffd49c"/></linearGradient><linearGradient id="x3" gradientUnits="userSpaceOnUse" x1="633.8" y1="0" x2="987.8" y2="0"><stop offset="0.000" stop-color="#7effcd"/><stop offset="0.712" stop-color="#faffc5"/><stop offset="0.785" stop-color="#fff6bd"/><stop offset="1.000" stop-color="#ffd29d"/></linearGradient><linearGradient id="x4" gradientUnits="userSpaceOnUse" x1="633.8" y1="0" x2="987.8" y2="0"><stop offset="0.000" stop-color="#80ffd0"/><stop offset="0.706" stop-color="#fdffc9"/><stop offset="1.000" stop-color="#ffcf9e"/></linearGradient><linearGradient id="x5" gradientUnits="userSpaceOnUse" x1="633.8" y1="0" x2="987.8" y2="0"><stop offset="0.000" stop-color="#82ffd4"/><stop offset="0.712" stop-color="#fffdcb"/><stop offset="1.000" stop-color="#ffcc9f"/></linearGradient><linearGradient id="x6" gradientUnits="userSpaceOnUse" x1="633.8" y1="0" x2="987.8" y2="0"><stop offset="0.000" stop-color="#84ffd7"/><stop offset="0.695" stop-color="#fffdcf"/><stop offset="1.000" stop-color="#ffc9a0"/></linearGradient><linearGradient id="x7" gradientUnits="userSpaceOnUse" x1="633.8" y1="0" x2="987.8" y2="0"><stop offset="0.000" stop-color="#86ffdb"/><stop offset="0.678" stop-color="#fffdd3"/><stop offset="1.000" stop-color="#ffc6a1"/></linearGradient><linearGradient id="x8" gradientUnits="userSpaceOnUse" x1="633.8" y1="0" x2="987.8" y2="0"><stop offset="0.000" stop-color="#89ffde"/><stop offset="0.661" stop-color="#fffcd6"/><stop offset="1.000" stop-color="#ffc3a2"/></linearGradient><linearGradient id="x9" gradientUnits="userSpaceOnUse" x1="633.8" y1="0" x2="987.8" y2="0"><stop offset="0.000" stop-color="#8bffe2"/><stop offset="0.644" stop-color="#fffcda"/><stop offset="1.000" stop-color="#ffc0a2"/></linearGradient><linearGradient id="x10" gradientUnits="userSpaceOnUse" x1="633.8" y1="0" x2="987.8" y2="0"><stop offset="0.000" stop-color="#8dffe6"/><stop offset="0.627" stop-color="#fffcdf"/><stop offset="1.000" stop-color="#ffbda3"/></linearGradient><linearGradient id="x11" gradientUnits="userSpaceOnUse" x1="633.8" y1="0" x2="987.8" y2="0"><stop offset="0.000" stop-color="#90ffea"/><stop offset="0.610" stop-color="#fffce3"/><stop offset="1.000" stop-color="#ffbba4"/></linearGradient><linearGradient id="x12" gradientUnits="userSpaceOnUse" x1="633.8" y1="0" x2="987.8" y2="0"><stop offset="0.000" stop-color="#92ffed"/><stop offset="0.588" stop-color="#fffde8"/><stop offset="0.977" stop-color="#ffbba8"/><stop offset="1.000" stop-color="#ffb8a5"/></linearGradient><linearGradient id="x13" gradientUnits="userSpaceOnUse" x1="633.8" y1="0" x2="987.8" y2="0"><stop offset="0.000" stop-color="#95fff1"/><stop offset="0.571" stop-color="#fffdec"/><stop offset="0.955" stop-color="#ffbbac"/><stop offset="1.000" stop-color="#ffb5a6"/></linearGradient><linearGradient id="x14" gradientUnits="userSpaceOnUse" x1="633.8" y1="0" x2="987.8" y2="0"><stop offset="0.000" stop-color="#97fff5"/><stop offset="0.554" stop-color="#fffdf0"/><stop offset="0.938" stop-color="#ffbbaf"/><stop offset="1.000" stop-color="#ffb2a7"/></linearGradient><linearGradient id="x15" gradientUnits="userSpaceOnUse" x1="633.8" y1="0" x2="987.8" y2="0"><stop offset="0.000" stop-color="#9afff9"/><stop offset="0.537" stop-color="#fffdf5"/><stop offset="0.921" stop-color="#ffbab3"/><stop offset="1.000" stop-color="#ffafa8"/></linearGradient><linearGradient id="x16" gradientUnits="userSpaceOnUse" x1="633.8" y1="0" x2="987.8" y2="0"><stop offset="0.000" stop-color="#9cfffe"/><stop offset="0.520" stop-color="#fffcf9"/><stop offset="0.898" stop-color="#ffbbb7"/><stop offset="1.000" stop-color="#ffada8"/></linearGradient><linearGradient id="x17" gradientUnits="userSpaceOnUse" x1="633.8" y1="0" x2="987.8" y2="0"><stop offset="0.000" stop-color="#9dfcff"/><stop offset="0.508" stop-color="#fffbfc"/><stop offset="0.881" stop-color="#ffbaba"/><stop offset="1.000" stop-color="#ffaaa9"/></linearGradient><linearGradient id="x18" gradientUnits="userSpaceOnUse" x1="633.8" y1="0" x2="987.8" y2="0"><stop offset="0.000" stop-color="#9df8ff"/><stop offset="0.508" stop-color="#fff7fd"/><stop offset="0.887" stop-color="#ffb7ba"/><stop offset="1.000" stop-color="#ffa7aa"/></linearGradient><linearGradient id="x19" gradientUnits="userSpaceOnUse" x1="633.8" y1="0" x2="987.8" y2="0"><stop offset="0.000" stop-color="#9cf4ff"/><stop offset="0.514" stop-color="#fff3fd"/><stop offset="0.893" stop-color="#ffb3ba"/><stop offset="1.000" stop-color="#ffa4ab"/></linearGradient><linearGradient id="x20" gradientUnits="userSpaceOnUse" x1="633.8" y1="0" x2="987.8" y2="0"><stop offset="0.000" stop-color="#9cf0ff"/><stop offset="0.520" stop-color="#ffeefc"/><stop offset="0.898" stop-color="#ffafba"/><stop offset="1.000" stop-color="#ffa2ac"/></linearGradient><linearGradient id="x21" gradientUnits="userSpaceOnUse" x1="633.8" y1="0" x2="987.8" y2="0"><stop offset="0.000" stop-color="#9cecff"/><stop offset="0.520" stop-color="#ffeafd"/><stop offset="0.898" stop-color="#ffacbb"/><stop offset="1.000" stop-color="#ff9fad"/></linearGradient><linearGradient id="x22" gradientUnits="userSpaceOnUse" x1="633.8" y1="0" x2="987.8" y2="0"><stop offset="0.000" stop-color="#9be8ff"/><stop offset="0.525" stop-color="#ffe6fd"/><stop offset="0.910" stop-color="#ffa8ba"/><stop offset="1.000" stop-color="#ff9cad"/></linearGradient><linearGradient id="x23" gradientUnits="userSpaceOnUse" x1="633.8" y1="0" x2="987.8" y2="0"><stop offset="0.000" stop-color="#9be4ff"/><stop offset="0.531" stop-color="#ffe1fc"/><stop offset="0.915" stop-color="#ffa5ba"/><stop offset="1.000" stop-color="#ff9aae"/></linearGradient><linearGradient id="x24" gradientUnits="userSpaceOnUse" x1="633.8" y1="0" x2="987.8" y2="0"><stop offset="0.000" stop-color="#9be0ff"/><stop offset="0.537" stop-color="#ffddfc"/><stop offset="0.927" stop-color="#ffa0b9"/><stop offset="1.000" stop-color="#ff97af"/></linearGradient><linearGradient id="x25" gradientUnits="userSpaceOnUse" x1="633.8" y1="0" x2="987.8" y2="0"><stop offset="0.000" stop-color="#9bdcff"/><stop offset="0.537" stop-color="#ffd9fd"/><stop offset="0.927" stop-color="#ff9dba"/><stop offset="1.000" stop-color="#ff94b0"/></linearGradient><linearGradient id="x26" gradientUnits="userSpaceOnUse" x1="633.8" y1="0" x2="987.8" y2="0"><stop offset="0.000" stop-color="#9ad8ff"/><stop offset="0.542" stop-color="#ffd5fc"/><stop offset="0.932" stop-color="#ff9aba"/><stop offset="1.000" stop-color="#ff92b1"/></linearGradient><linearGradient id="x27" gradientUnits="userSpaceOnUse" x1="633.8" y1="0" x2="987.8" y2="0"><stop offset="0.000" stop-color="#9ad5ff"/><stop offset="0.548" stop-color="#ffd0fc"/><stop offset="0.944" stop-color="#ff96b9"/><stop offset="1.000" stop-color="#ff8fb2"/></linearGradient><linearGradient id="x28" gradientUnits="userSpaceOnUse" x1="633.8" y1="0" x2="987.8" y2="0"><stop offset="0.000" stop-color="#9ad1ff"/><stop offset="0.548" stop-color="#ffcdfd"/><stop offset="0.944" stop-color="#ff93ba"/><stop offset="1.000" stop-color="#ff8cb2"/></linearGradient><linearGradient id="x29" gradientUnits="userSpaceOnUse" x1="633.8" y1="0" x2="987.8" y2="0"><stop offset="0.000" stop-color="#9acdff"/><stop offset="0.554" stop-color="#ffc9fc"/><stop offset="0.949" stop-color="#ff90ba"/><stop offset="1.000" stop-color="#ff8ab3"/></linearGradient><linearGradient id="x30" gradientUnits="userSpaceOnUse" x1="633.8" y1="0" x2="987.8" y2="0"><stop offset="0.000" stop-color="#99c9ff"/><stop offset="0.559" stop-color="#ffc4fc"/><stop offset="0.960" stop-color="#ff8cb9"/><stop offset="1.000" stop-color="#ff87b4"/></linearGradient><linearGradient id="x31" gradientUnits="userSpaceOnUse" x1="633.8" y1="0" x2="987.8" y2="0"><stop offset="0.000" stop-color="#99c6ff"/><stop offset="0.559" stop-color="#ffc1fd"/><stop offset="0.960" stop-color="#ff89ba"/><stop offset="1.000" stop-color="#ff85b5"/></linearGradient><linearGradient id="x32" gradientUnits="userSpaceOnUse" x1="633.8" y1="0" x2="987.8" y2="0"><stop offset="0.000" stop-color="#99c2ff"/><stop offset="0.565" stop-color="#ffbdfd"/><stop offset="0.966" stop-color="#ff86ba"/><stop offset="1.000" stop-color="#ff82b5"/></linearGradient><linearGradient id="x33" gradientUnits="userSpaceOnUse" x1="633.8" y1="0" x2="987.8" y2="0"><stop offset="0.000" stop-color="#99beff"/><stop offset="0.571" stop-color="#ffb9fc"/><stop offset="0.977" stop-color="#ff82b9"/><stop offset="1.000" stop-color="#ff80b6"/></linearGradient><linearGradient id="x34" gradientUnits="userSpaceOnUse" x1="633.8" y1="0" x2="987.8" y2="0"><stop offset="0.000" stop-color="#99bbff"/><stop offset="0.571" stop-color="#ffb5fd"/><stop offset="0.977" stop-color="#ff7fba"/><stop offset="1.000" stop-color="#ff7db7"/></linearGradient><clipPath id="tclip"><rect x="999" y="660" width="632.5" height="207"/></clipPath><linearGradient id="redge" x1="0" y1="0" x2="1" y2="0"><stop offset="0" stop-color="#333" stop-opacity="0"/><stop offset="0.6" stop-color="#222"/><stop offset="1" stop-color="#1e1e1e"/></linearGradient><linearGradient id="bbg" x1="0" y1="0" x2="0" y2="1"><stop offset="0" stop-color="#a8a8a8"/><stop offset="0.55" stop-color="#7c7c7c"/><stop offset="1" stop-color="#6a6a6a"/></linearGradient><linearGradient id="swsh" x1="0" y1="0" x2="0" y2="1"><stop offset="0" stop-color="#000" stop-opacity="0.2"/><stop offset="0.08" stop-color="#000" stop-opacity="0"/></linearGradient><linearGradient id="cbg" x1="0" y1="0" x2="0" y2="1"><stop offset="0" stop-color="#b2b2b2"/><stop offset="1" stop-color="#6e6e6e"/></linearGradient><linearGradient id="cbg2" x1="0" y1="0" x2="0" y2="1"><stop offset="0" stop-color="#b8b8b8"/><stop offset="1" stop-color="#727272"/></linearGradient><radialGradient id="cbc" cx="0.5" cy="0.3" r="0.7"><stop offset="0" stop-color="#868686"/><stop offset="0.7" stop-color="#9c9c9c"/><stop offset="1" stop-color="#a8a8a8" stop-opacity="0.6"/></radialGradient><filter id="ashadow" x="-50%" y="-50%" width="200%" height="200%"><feDropShadow dx="1" dy="1.5" stdDeviation="1.2" flood-color="#000" flood-opacity="0.7"/></filter></defs>
<rect x="0" y="0" width="1671" height="1007" fill="#333333"/>
<rect x="0" y="0" width="1671" height="38" fill="#232323"/>
<rect x="0" y="38" width="1671" height="1.5" fill="#1c1c1c"/>
<rect x="0" y="38" width="2.5" height="969" fill="#585858"/>
<path d="M2.5,38.5 V6 Q2.5,1.5 7,1.5 H112 Q116.5,1.5 116.5,6 V38.5" fill="url(#tabg)" stroke="#8a8a8a" stroke-width="1"/>
<line x1="75.5" y1="2" x2="75.5" y2="38" stroke="#7a7a7a" stroke-width="1"/>
<circle cx="94.5" cy="22" r="11.5" fill="url(#plusg)"/>
<line x1="91" y1="23.3" x2="98" y2="23.3" stroke="#a0a0a0" stroke-width="1.1"/>
<line x1="94.5" y1="19.8" x2="94.5" y2="26.8" stroke="#a0a0a0" stroke-width="1.1"/>
<text x="9.5" y="25.7" font-size="13.5" fill="#e8e8e8" text-anchor="start" textLength="58.5" lengthAdjust="spacingAndGlyphs">History 1</text>
<path d="M1057,38 V6 Q1057,1.5 1061.5,1.5 H1230.5 Q1235,1.5 1235,6 V38 Z" fill="url(#devg)"/>
<path d="M1057,38 V6 Q1057,1.5 1061.5,1.5 H1064.2 V38 Z" fill="#22dd22"/>
<line x1="1190.5" y1="2" x2="1190.5" y2="38" stroke="#3a3a3a" stroke-width="1.5"/>
<circle cx="1166.7" cy="19.7" r="12" fill="url(#ddg)"/>
<path d="M1160.7,18.2 H1172.7 L1166.7,24.7 Z" fill="#ffffff"/>
<text x="1068" y="15" font-size="12.5" fill="#e8e8e8" text-anchor="start" textLength="81" lengthAdjust="spacingAndGlyphs">X-Rite i1Pro 3</text>
<text x="1068" y="33.5" font-size="12.5" fill="#e8e8e8" text-anchor="start" textLength="70" lengthAdjust="spacingAndGlyphs">Direct View</text>
<circle cx="1216.4" cy="19.7" r="15.3" fill="#0a0ae6" stroke="#ffffff" stroke-width="1.5"/>
<text x="1216.4" y="23.5" font-size="10.5" fill="#ffffff" text-anchor="middle" textLength="17" lengthAdjust="spacingAndGlyphs">705</text>
<path d="M1243,38 V6 Q1243,1.5 1247.5,1.5 H1400.5 Q1405,1.5 1405,6 V38 Z" fill="url(#devg)"/>
<path d="M1243,38 V6 Q1243,1.5 1247.5,1.5 H1250.2 V38 Z" fill="#22dd22"/>
<circle cx="1384.8" cy="19.7" r="12" fill="url(#ddg)"/>
<path d="M1378.8,18.2 H1390.8 L1384.8,24.7 Z" fill="#ffffff"/>
<text x="1255" y="15" font-size="12.5" fill="#e8e8e8" text-anchor="start" textLength="79" lengthAdjust="spacingAndGlyphs">Mobile Forge</text>
<path d="M1414,38 V6 Q1414,1.5 1418.5,1.5 H1587.0 Q1591.5,1.5 1591.5,6 V38 Z" fill="url(#devg)"/>
<path d="M1414,38 V6 Q1414,1.5 1418.5,1.5 H1420.5 V38 Z" fill="#e6e600"/>
<circle cx="1572" cy="19.5" r="12" fill="url(#ddg)"/>
<path d="M1566,18.0 H1578 L1572,24.5 Z" fill="#ffffff"/>
<text x="1424" y="15" font-size="12.5" fill="#e8e8e8" text-anchor="start" textLength="131" lengthAdjust="spacingAndGlyphs">Direct Display Control</text>
<rect x="1596.5" y="1.5" width="41.5" height="34" rx="4.5" fill="url(#btng)" stroke="#cfcfcf" stroke-width="1.2"/>
<circle cx="1616.9" cy="18" r="12" fill="url(#gcg)"/>
<path d="M1615.56,10.21 L1618.24,10.21 L1618.67,12.27 L1619.70,12.69 L1621.46,11.55 L1623.35,13.44 L1622.21,15.20 L1622.63,16.23 L1624.69,16.66 L1624.69,19.34 L1622.63,19.77 L1622.21,20.80 L1623.35,22.56 L1621.46,24.45 L1619.70,23.31 L1618.67,23.73 L1618.24,25.79 L1615.56,25.79 L1615.13,23.73 L1614.10,23.31 L1612.34,24.45 L1610.45,22.56 L1611.59,20.80 L1611.17,19.77 L1609.11,19.34 L1609.11,16.66 L1611.17,16.23 L1611.59,15.20 L1610.45,13.44 L1612.34,11.55 L1614.10,12.69 L1615.13,12.27 Z M1621.1,18 A4.2,4.2 0 1 0 1612.7,18 A4.2,4.2 0 1 0 1621.1,18 Z" fill="#dcdcdc" fill-rule="evenodd" stroke="#dcdcdc" stroke-width="0.4" stroke-linejoin="round"/>
<rect x="1639" y="1.5" width="40" height="34" rx="4.5" fill="url(#btng)" stroke="#cfcfcf" stroke-width="1.2"/>
<circle cx="1656" cy="18" r="12" fill="url(#gcg)"/>
<path d="M1652.3,17.8 L1659.2,11 V24 Z" fill="#ffffff"/>
<text x="11" y="125.6" font-size="38.5" fill="#f0f0f0" text-anchor="start" textLength="228" lengthAdjust="spacingAndGlyphs">Color Gamut</text>
<text x="190" y="226" font-size="14" fill="#d8d8d8" text-anchor="middle" textLength="79" lengthAdjust="spacingAndGlyphs">DeltaE 2000</text>
<rect x="23" y="231" width="335" height="372" fill="#232323"/>
<line x1="67.7" y1="231" x2="67.7" y2="603" stroke="#8c8c8c" stroke-width="1.5"/>
<line x1="112.4" y1="231" x2="112.4" y2="603" stroke="#8c8c8c" stroke-width="1.5"/>
<line x1="157.10000000000002" y1="231" x2="157.10000000000002" y2="603" stroke="#8c8c8c" stroke-width="1.5"/>
<line x1="201.8" y1="231" x2="201.8" y2="603" stroke="#8c8c8c" stroke-width="1.5"/>
<line x1="246.5" y1="231" x2="246.5" y2="603" stroke="#8c8c8c" stroke-width="1.5"/>
<line x1="291.20000000000005" y1="231" x2="291.20000000000005" y2="603" stroke="#8c8c8c" stroke-width="1.5"/>
<line x1="335.90000000000003" y1="231" x2="335.90000000000003" y2="603" stroke="#8c8c8c" stroke-width="1.5"/>
<rect x="23" y="231" width="335" height="372" fill="none" stroke="#8c8c8c" stroke-width="1.5"/>
<line x1="22.5" y1="603" x2="358.5" y2="603" stroke="#a4a4a4" stroke-width="2.2"/>
<line x1="23.0" y1="603" x2="23.0" y2="608.5" stroke="#c8c8c8" stroke-width="1.5"/>
<text x="23.0" y="624.8" font-size="14" fill="#d8d8d8" text-anchor="middle">0</text>
<line x1="67.7" y1="603" x2="67.7" y2="608.5" stroke="#c8c8c8" stroke-width="1.5"/>
<text x="67.7" y="624.8" font-size="14" fill="#d8d8d8" text-anchor="middle">2</text>
<line x1="112.4" y1="603" x2="112.4" y2="608.5" stroke="#c8c8c8" stroke-width="1.5"/>
<text x="112.4" y="624.8" font-size="14" fill="#d8d8d8" text-anchor="middle">4</text>
<line x1="157.10000000000002" y1="603" x2="157.10000000000002" y2="608.5" stroke="#c8c8c8" stroke-width="1.5"/>
<text x="157.10000000000002" y="624.8" font-size="14" fill="#d8d8d8" text-anchor="middle">6</text>
<line x1="201.8" y1="603" x2="201.8" y2="608.5" stroke="#c8c8c8" stroke-width="1.5"/>
<text x="201.8" y="624.8" font-size="14" fill="#d8d8d8" text-anchor="middle">8</text>
<line x1="246.5" y1="603" x2="246.5" y2="608.5" stroke="#c8c8c8" stroke-width="1.5"/>
<text x="246.5" y="624.8" font-size="14" fill="#d8d8d8" text-anchor="middle">10</text>
<line x1="291.20000000000005" y1="603" x2="291.20000000000005" y2="608.5" stroke="#c8c8c8" stroke-width="1.5"/>
<text x="291.20000000000005" y="624.8" font-size="14" fill="#d8d8d8" text-anchor="middle">12</text>
<line x1="335.90000000000003" y1="603" x2="335.90000000000003" y2="608.5" stroke="#c8c8c8" stroke-width="1.5"/>
<text x="335.90000000000003" y="624.8" font-size="14" fill="#d8d8d8" text-anchor="middle">14</text>
<rect x="23.6" y="235.4" width="226.9" height="34" fill="url(#deb0)" stroke="#000" stroke-width="1.3"/>
<rect x="23.6" y="282.2" width="110.8" height="34" fill="url(#deb1)" stroke="#000" stroke-width="1.3"/>
<rect x="23.6" y="329.0" width="200.9" height="34" fill="url(#deb2)" stroke="#000" stroke-width="1.3"/>
<rect x="23.6" y="375.8" width="243.5" height="34" fill="url(#deb3)" stroke="#000" stroke-width="1.3"/>
<rect x="23.6" y="422.6" width="101.7" height="34" fill="url(#deb4)" stroke="#000" stroke-width="1.3"/>
<rect x="23.6" y="469.4" width="160.1" height="34" fill="url(#deb5)" stroke="#000" stroke-width="1.3"/>
<rect x="23.6" y="516.2" width="217.8" height="34" fill="url(#deb6)" stroke="#000" stroke-width="1.3"/>
<rect x="23.6" y="563.0" width="200.7" height="34" fill="url(#deb7)" stroke="#000" stroke-width="1.3"/>
<text x="469.2" y="117.2" font-size="14" fill="#d8d8d8" text-anchor="middle">Delta L</text>
<rect x="410.5" y="122.5" width="145" height="316" fill="#232323"/>
<line x1="405.5" y1="122.5" x2="410.5" y2="122.5" stroke="#c8c8c8" stroke-width="1.5"/>
<text x="405.0" y="128.5" font-size="14" fill="#d8d8d8" text-anchor="end">15</text>
<line x1="410.5" y1="175.5" x2="555.5" y2="175.5" stroke="#8c8c8c" stroke-width="1.5"/>
<line x1="405.5" y1="175.5" x2="410.5" y2="175.5" stroke="#c8c8c8" stroke-width="1.5"/>
<text x="405.0" y="181.5" font-size="14" fill="#d8d8d8" text-anchor="end">10</text>
<line x1="410.5" y1="228.2" x2="555.5" y2="228.2" stroke="#8c8c8c" stroke-width="1.5"/>
<line x1="405.5" y1="228.2" x2="410.5" y2="228.2" stroke="#c8c8c8" stroke-width="1.5"/>
<text x="405.0" y="234.2" font-size="14" fill="#d8d8d8" text-anchor="end">5</text>
<line x1="410.5" y1="281" x2="555.5" y2="281" stroke="#8c8c8c" stroke-width="1.5"/>
<line x1="405.5" y1="281" x2="410.5" y2="281" stroke="#c8c8c8" stroke-width="1.5"/>
<text x="405.0" y="287" font-size="14" fill="#d8d8d8" text-anchor="end">0</text>
<line x1="410.5" y1="334" x2="555.5" y2="334" stroke="#8c8c8c" stroke-width="1.5"/>
<line x1="405.5" y1="334" x2="410.5" y2="334" stroke="#c8c8c8" stroke-width="1.5"/>
<text x="405.0" y="340" font-size="14" fill="#d8d8d8" text-anchor="end">-5</text>
<line x1="410.5" y1="386.7" x2="555.5" y2="386.7" stroke="#8c8c8c" stroke-width="1.5"/>
<line x1="405.5" y1="386.7" x2="410.5" y2="386.7" stroke="#c8c8c8" stroke-width="1.5"/>
<text x="405.0" y="392.7" font-size="14" fill="#d8d8d8" text-anchor="end">-10</text>
<line x1="405.5" y1="438.5" x2="410.5" y2="438.5" stroke="#c8c8c8" stroke-width="1.5"/>
<text x="405.0" y="444.5" font-size="14" fill="#d8d8d8" text-anchor="end">-15</text>
<line x1="424.5" y1="281" x2="541.5" y2="281" stroke="#1a1a1a" stroke-width="1.5"/>
<rect x="410.5" y="122.5" width="145" height="316" fill="none" stroke="#8c8c8c" stroke-width="1.5"/>
<line x1="410.0" y1="439" x2="556.0" y2="439" stroke="#a0a0a0" stroke-width="2.2"/>
<line x1="410.5" y1="438.5" x2="410.5" y2="444.5" stroke="#c8c8c8" stroke-width="1.5"/>
<line x1="555.5" y1="438.5" x2="555.5" y2="444.5" stroke="#d0d0d0" stroke-width="2"/>
<text x="483.0" y="455.3" font-size="14.5" fill="#d8d8d8" text-anchor="middle">100W</text>
<text x="667" y="117.2" font-size="14" fill="#d8d8d8" text-anchor="middle">Delta C</text>
<rect x="607.8" y="122.5" width="145" height="316" fill="#232323"/>
<line x1="602.8" y1="122.5" x2="607.8" y2="122.5" stroke="#c8c8c8" stroke-width="1.5"/>
<text x="602.3" y="128.5" font-size="14" fill="#d8d8d8" text-anchor="end">15</text>
<line x1="607.8" y1="175.5" x2="752.8" y2="175.5" stroke="#8c8c8c" stroke-width="1.5"/>
<line x1="602.8" y1="175.5" x2="607.8" y2="175.5" stroke="#c8c8c8" stroke-width="1.5"/>
<text x="602.3" y="181.5" font-size="14" fill="#d8d8d8" text-anchor="end">10</text>
<line x1="607.8" y1="228.2" x2="752.8" y2="228.2" stroke="#8c8c8c" stroke-width="1.5"/>
<line x1="602.8" y1="228.2" x2="607.8" y2="228.2" stroke="#c8c8c8" stroke-width="1.5"/>
<text x="602.3" y="234.2" font-size="14" fill="#d8d8d8" text-anchor="end">5</text>
<line x1="607.8" y1="281" x2="752.8" y2="281" stroke="#8c8c8c" stroke-width="1.5"/>
<line x1="602.8" y1="281" x2="607.8" y2="281" stroke="#c8c8c8" stroke-width="1.5"/>
<text x="602.3" y="287" font-size="14" fill="#d8d8d8" text-anchor="end">0</text>
<line x1="607.8" y1="334" x2="752.8" y2="334" stroke="#8c8c8c" stroke-width="1.5"/>
<line x1="602.8" y1="334" x2="607.8" y2="334" stroke="#c8c8c8" stroke-width="1.5"/>
<text x="602.3" y="340" font-size="14" fill="#d8d8d8" text-anchor="end">-5</text>
<line x1="607.8" y1="386.7" x2="752.8" y2="386.7" stroke="#8c8c8c" stroke-width="1.5"/>
<line x1="602.8" y1="386.7" x2="607.8" y2="386.7" stroke="#c8c8c8" stroke-width="1.5"/>
<text x="602.3" y="392.7" font-size="14" fill="#d8d8d8" text-anchor="end">-10</text>
<line x1="602.8" y1="438.5" x2="607.8" y2="438.5" stroke="#c8c8c8" stroke-width="1.5"/>
<text x="602.3" y="444.5" font-size="14" fill="#d8d8d8" text-anchor="end">-15</text>
<rect x="607.8" y="122.5" width="145" height="316" fill="none" stroke="#8c8c8c" stroke-width="1.5"/>
<line x1="607.3" y1="439" x2="753.3" y2="439" stroke="#a0a0a0" stroke-width="2.2"/>
<line x1="607.8" y1="438.5" x2="607.8" y2="444.5" stroke="#c8c8c8" stroke-width="1.5"/>
<line x1="752.8" y1="438.5" x2="752.8" y2="444.5" stroke="#d0d0d0" stroke-width="2"/>
<text x="680.3" y="455.3" font-size="14.5" fill="#d8d8d8" text-anchor="middle">100W</text>
<rect x="623.5" y="160.5" width="113.5" height="120.5" fill="url(#dcg)" stroke="#000" stroke-width="2"/>
<text x="864.3" y="117.2" font-size="14" fill="#d8d8d8" text-anchor="middle">Delta H</text>
<rect x="805" y="122.5" width="145" height="316" fill="#232323"/>
<line x1="800" y1="122.5" x2="805" y2="122.5" stroke="#c8c8c8" stroke-width="1.5"/>
<text x="799.5" y="128.5" font-size="14" fill="#d8d8d8" text-anchor="end">15</text>
<line x1="805" y1="175.5" x2="950" y2="175.5" stroke="#8c8c8c" stroke-width="1.5"/>
<line x1="800" y1="175.5" x2="805" y2="175.5" stroke="#c8c8c8" stroke-width="1.5"/>
<text x="799.5" y="181.5" font-size="14" fill="#d8d8d8" text-anchor="end">10</text>
<line x1="805" y1="228.2" x2="950" y2="228.2" stroke="#8c8c8c" stroke-width="1.5"/>
<line x1="800" y1="228.2" x2="805" y2="228.2" stroke="#c8c8c8" stroke-width="1.5"/>
<text x="799.5" y="234.2" font-size="14" fill="#d8d8d8" text-anchor="end">5</text>
<line x1="805" y1="281" x2="950" y2="281" stroke="#8c8c8c" stroke-width="1.5"/>
<line x1="800" y1="281" x2="805" y2="281" stroke="#c8c8c8" stroke-width="1.5"/>
<text x="799.5" y="287" font-size="14" fill="#d8d8d8" text-anchor="end">0</text>
<line x1="805" y1="334" x2="950" y2="334" stroke="#8c8c8c" stroke-width="1.5"/>
<line x1="800" y1="334" x2="805" y2="334" stroke="#c8c8c8" stroke-width="1.5"/>
<text x="799.5" y="340" font-size="14" fill="#d8d8d8" text-anchor="end">-5</text>
<line x1="805" y1="386.7" x2="950" y2="386.7" stroke="#8c8c8c" stroke-width="1.5"/>
<line x1="800" y1="386.7" x2="805" y2="386.7" stroke="#c8c8c8" stroke-width="1.5"/>
<text x="799.5" y="392.7" font-size="14" fill="#d8d8d8" text-anchor="end">-10</text>
<line x1="800" y1="438.5" x2="805" y2="438.5" stroke="#c8c8c8" stroke-width="1.5"/>
<text x="799.5" y="444.5" font-size="14" fill="#d8d8d8" text-anchor="end">-15</text>
<line x1="819" y1="281" x2="936" y2="281" stroke="#1a1a1a" stroke-width="1.5"/>
<rect x="805" y="122.5" width="145" height="316" fill="none" stroke="#8c8c8c" stroke-width="1.5"/>
<line x1="804.5" y1="439" x2="950.5" y2="439" stroke="#a0a0a0" stroke-width="2.2"/>
<line x1="805" y1="438.5" x2="805" y2="444.5" stroke="#c8c8c8" stroke-width="1.5"/>
<line x1="950" y1="438.5" x2="950" y2="444.5" stroke="#d0d0d0" stroke-width="2"/>
<text x="877.5" y="455.3" font-size="14.5" fill="#d8d8d8" text-anchor="middle">100W</text>
<rect x="378" y="471" width="592" height="163.5" fill="#000000"/>
<text x="0" y="0" font-size="12.5" fill="#e8e8e8" text-anchor="middle" transform="translate(390.5,507.5) rotate(-90)">Actual</text>
<text x="0" y="0" font-size="12.5" fill="#e8e8e8" text-anchor="middle" transform="translate(390.5,582.3) rotate(-90)">Target</text>
<rect x="395.0" y="479.8" width="61.5" height="65.2" fill="#aec4d2"/>
<rect x="395.0" y="545" width="61.5" height="65.7" fill="#c4c4c4"/>
<rect x="395.0" y="479.8" width="61.5" height="130.9" fill="none" stroke="#e8e8e8" stroke-width="1"/>
<text x="426.0" y="626" font-size="13" fill="#f0f0f0" text-anchor="middle">White</text>
<rect x="467.2" y="479.8" width="61.5" height="65.2" fill="#a24a2a"/>
<rect x="467.2" y="545" width="61.5" height="65.7" fill="#d4001e"/>
<rect x="467.2" y="479.8" width="61.5" height="130.9" fill="none" stroke="#e8e8e8" stroke-width="1"/>
<text x="498.2" y="626" font-size="13" fill="#f0f0f0" text-anchor="middle">Red</text>
<rect x="539.4" y="479.8" width="61.5" height="65.2" fill="#2cc98a"/>
<rect x="539.4" y="545" width="61.5" height="65.7" fill="#00c84e"/>
<rect x="539.4" y="479.8" width="61.5" height="130.9" fill="none" stroke="#e8e8e8" stroke-width="1"/>
<text x="570.4" y="626" font-size="13" fill="#f0f0f0" text-anchor="middle">Green</text>
<rect x="611.6" y="479.8" width="61.5" height="65.2" fill="#0028d2"/>
<rect x="611.6" y="545" width="61.5" height="65.7" fill="#0a0fc8"/>
<rect x="611.6" y="479.8" width="61.5" height="130.9" fill="none" stroke="#e8e8e8" stroke-width="1"/>
<text x="642.6" y="626" font-size="13" fill="#f0f0f0" text-anchor="middle">Blue</text>
<rect x="683.8" y="479.8" width="61.5" height="65.2" fill="#92c8b2"/>
<rect x="683.8" y="545" width="61.5" height="65.7" fill="#00c8c8"/>
<rect x="683.8" y="479.8" width="61.5" height="130.9" fill="none" stroke="#e8e8e8" stroke-width="1"/>
<text x="714.8" y="626" font-size="13" fill="#f0f0f0" text-anchor="middle">Cyan</text>
<rect x="756.0" y="479.8" width="61.5" height="65.2" fill="#a24ad4"/>
<rect x="756.0" y="545" width="61.5" height="65.7" fill="#d200c8"/>
<rect x="756.0" y="479.8" width="61.5" height="130.9" fill="none" stroke="#e8e8e8" stroke-width="1"/>
<text x="787.0" y="626" font-size="13" fill="#f0f0f0" text-anchor="middle">Magenta</text>
<rect x="828.2" y="479.8" width="61.5" height="65.2" fill="#b4c63c"/>
<rect x="828.2" y="545" width="61.5" height="65.7" fill="#c8c400"/>
<rect x="828.2" y="479.8" width="61.5" height="130.9" fill="none" stroke="#e8e8e8" stroke-width="1"/>
<text x="859.2" y="626" font-size="13" fill="#f0f0f0" text-anchor="middle">Yellow</text>
<rect x="900.4000000000001" y="479.8" width="61.5" height="65.2" fill="#dcf0fc"/>
<rect x="900.4000000000001" y="545" width="61.5" height="65.7" fill="#efefef"/>
<rect x="900.4000000000001" y="479.8" width="61.5" height="130.9" fill="none" stroke="#e8e8e8" stroke-width="1"/>
<text x="931.4000000000001" y="626" font-size="13" fill="#f0f0f0" text-anchor="middle">100W</text>
<rect x="976.5" y="89.5" width="694.5" height="558" fill="#1c1c1c"/>
<rect x="983.5" y="96.5" width="680" height="545" fill="#333333"/>
<text x="1323" y="114.6" font-size="13.5" fill="#d8d8d8" text-anchor="middle">CIE 1976 u'v'</text>
<rect x="1020.7" y="121" width="639.0999999999999" height="491" fill="#232323"/>
<g clip-path="url(#plotclip)"><g clip-path="url(#hsclip)"><g filter="url(#hblur)"><rect x="1036.7" y="122.4" width="102.0" height="4.6" fill="url(#h0)"/><rect x="1027.7" y="126.4" width="152.0" height="4.6" fill="url(#h1)"/><rect x="1022.7" y="130.4" width="192.0" height="4.6" fill="url(#h2)"/><rect x="1019.7" y="134.4" width="232.0" height="4.6" fill="url(#h3)"/><rect x="1017.7" y="138.4" width="268.0" height="4.6" fill="url(#h4)"/><rect x="1016.7" y="142.4" width="304.0" height="4.6" fill="url(#h5)"/><rect x="1015.7" y="146.4" width="340.0" height="4.6" fill="url(#h6)"/><rect x="1014.7" y="150.4" width="376.0" height="4.6" fill="url(#h7)"/><rect x="1014.7" y="154.4" width="410.0" height="4.6" fill="url(#h8)"/><rect x="1014.7" y="158.4" width="444.0" height="4.6" fill="url(#h9)"/><rect x="1014.7" y="162.4" width="480.0" height="4.6" fill="url(#h10)"/><rect x="1014.7" y="166.4" width="514.0" height="4.6" fill="url(#h11)"/><rect x="1014.7" y="170.4" width="550.0" height="4.6" fill="url(#h12)"/><rect x="1014.7" y="174.4" width="584.0" height="4.6" fill="url(#h13)"/><rect x="1014.7" y="178.4" width="620.0" height="4.6" fill="url(#h14)"/><rect x="1014.7" y="182.4" width="650.0" height="4.6" fill="url(#h15)"/><rect x="1014.7" y="186.4" width="650.0" height="4.6" fill="url(#h16)"/><rect x="1015.7" y="190.4" width="650.0" height="4.6" fill="url(#h17)"/><rect x="1015.7" y="194.4" width="650.0" height="4.6" fill="url(#h18)"/><rect x="1016.7" y="198.4" width="648.0" height="4.6" fill="url(#h19)"/><rect x="1017.7" y="202.4" width="648.0" height="4.6" fill="url(#h20)"/><rect x="1018.7" y="206.4" width="646.0" height="4.6" fill="url(#h21)"/><rect x="1018.7" y="210.4" width="646.0" height="4.6" fill="url(#h22)"/><rect x="1019.7" y="214.4" width="646.0" height="4.6" fill="url(#h23)"/><rect x="1020.7" y="218.4" width="644.0" height="4.6" fill="url(#h24)"/><rect x="1021.7" y="222.4" width="644.0" height="4.6" fill="url(#h25)"/><rect x="1023.7" y="226.4" width="642.0" height="4.6" fill="url(#h26)"/><rect x="1024.7" y="230.4" width="640.0" height="4.6" fill="url(#h27)"/><rect x="1025.7" y="234.4" width="640.0" height="4.6" fill="url(#h28)"/><rect x="1026.7" y="238.4" width="636.0" height="4.6" fill="url(#h29)"/><rect x="1028.7" y="242.4" width="630.0" height="4.6" fill="url(#h30)"/><rect x="1029.7" y="246.4" width="624.0" height="4.6" fill="url(#h31)"/><rect x="1030.7" y="250.4" width="620.0" height="4.6" fill="url(#h32)"/><rect x="1032.7" y="254.4" width="614.0" height="4.6" fill="url(#h33)"/><rect x="1033.7" y="258.4" width="608.0" height="4.6" fill="url(#h34)"/><rect x="1035.7" y="262.4" width="602.0" height="4.6" fill="url(#h35)"/><rect x="1036.7" y="266.4" width="598.0" height="4.6" fill="url(#h36)"/><rect x="1038.7" y="270.4" width="592.0" height="4.6" fill="url(#h37)"/><rect x="1039.7" y="274.4" width="588.0" height="4.6" fill="url(#h38)"/><rect x="1041.7" y="278.4" width="582.0" height="4.6" fill="url(#h39)"/><rect x="1042.7" y="282.4" width="576.0" height="4.6" fill="url(#h40)"/><rect x="1044.7" y="286.4" width="570.0" height="4.6" fill="url(#h41)"/><rect x="1046.7" y="290.4" width="564.0" height="4.6" fill="url(#h42)"/><rect x="1047.7" y="294.4" width="560.0" height="4.6" fill="url(#h43)"/><rect x="1049.7" y="298.4" width="554.0" height="4.6" fill="url(#h44)"/><rect x="1051.7" y="302.4" width="548.0" height="4.6" fill="url(#h45)"/><rect x="1053.7" y="306.4" width="542.0" height="4.6" fill="url(#h46)"/><rect x="1054.7" y="310.4" width="536.0" height="4.6" fill="url(#h47)"/><rect x="1056.7" y="314.4" width="532.0" height="4.6" fill="url(#h48)"/><rect x="1058.7" y="318.4" width="526.0" height="4.6" fill="url(#h49)"/><rect x="1060.7" y="322.4" width="520.0" height="4.6" fill="url(#h50)"/><rect x="1062.7" y="326.4" width="514.0" height="4.6" fill="url(#h51)"/><rect x="1064.7" y="330.4" width="508.0" height="4.6" fill="url(#h52)"/><rect x="1066.7" y="334.4" width="502.0" height="4.6" fill="url(#h53)"/><rect x="1068.7" y="338.4" width="496.0" height="4.6" fill="url(#h54)"/><rect x="1070.7" y="342.4" width="490.0" height="4.6" fill="url(#h55)"/><rect x="1072.7" y="346.4" width="484.0" height="4.6" fill="url(#h56)"/><rect x="1074.7" y="350.4" width="478.0" height="4.6" fill="url(#h57)"/><rect x="1076.7" y="354.4" width="472.0" height="4.6" fill="url(#h58)"/><rect x="1078.7" y="358.4" width="466.0" height="4.6" fill="url(#h59)"/><rect x="1080.7" y="362.4" width="460.0" height="4.6" fill="url(#h60)"/><rect x="1082.7" y="366.4" width="454.0" height="4.6" fill="url(#h61)"/><rect x="1085.7" y="370.4" width="448.0" height="4.6" fill="url(#h62)"/><rect x="1087.7" y="374.4" width="442.0" height="4.6" fill="url(#h63)"/><rect x="1089.7" y="378.4" width="436.0" height="4.6" fill="url(#h64)"/><rect x="1092.7" y="382.4" width="428.0" height="4.6" fill="url(#h65)"/><rect x="1094.7" y="386.4" width="422.0" height="4.6" fill="url(#h66)"/><rect x="1096.7" y="390.4" width="416.0" height="4.6" fill="url(#h67)"/><rect x="1099.7" y="394.4" width="410.0" height="4.6" fill="url(#h68)"/><rect x="1101.7" y="398.4" width="404.0" height="4.6" fill="url(#h69)"/><rect x="1103.7" y="402.4" width="398.0" height="4.6" fill="url(#h70)"/><rect x="1106.7" y="406.4" width="392.0" height="4.6" fill="url(#h71)"/><rect x="1108.7" y="410.4" width="386.0" height="4.6" fill="url(#h72)"/><rect x="1110.7" y="414.4" width="380.0" height="4.6" fill="url(#h73)"/><rect x="1113.7" y="418.4" width="372.0" height="4.6" fill="url(#h74)"/><rect x="1115.7" y="422.4" width="366.0" height="4.6" fill="url(#h75)"/><rect x="1118.7" y="426.4" width="360.0" height="4.6" fill="url(#h76)"/><rect x="1120.7" y="430.4" width="354.0" height="4.6" fill="url(#h77)"/><rect x="1123.7" y="434.4" width="346.0" height="4.6" fill="url(#h78)"/><rect x="1125.7" y="438.4" width="340.0" height="4.6" fill="url(#h79)"/><rect x="1128.7" y="442.4" width="334.0" height="4.6" fill="url(#h80)"/><rect x="1131.7" y="446.4" width="326.0" height="4.6" fill="url(#h81)"/><rect x="1133.7" y="450.4" width="322.0" height="4.6" fill="url(#h82)"/><rect x="1136.7" y="454.4" width="314.0" height="4.6" fill="url(#h83)"/><rect x="1139.7" y="458.4" width="308.0" height="4.6" fill="url(#h84)"/><rect x="1141.7" y="462.4" width="302.0" height="4.6" fill="url(#h85)"/><rect x="1144.7" y="466.4" width="294.0" height="4.6" fill="url(#h86)"/><rect x="1147.7" y="470.4" width="288.0" height="4.6" fill="url(#h87)"/><rect x="1150.7" y="474.4" width="280.0" height="4.6" fill="url(#h88)"/><rect x="1153.7" y="478.4" width="274.0" height="4.6" fill="url(#h89)"/><rect x="1156.7" y="482.4" width="266.0" height="4.6" fill="url(#h90)"/><rect x="1158.7" y="486.4" width="260.0" height="4.6" fill="url(#h91)"/><rect x="1161.7" y="490.4" width="254.0" height="4.6" fill="url(#h92)"/><rect x="1164.7" y="494.4" width="248.0" height="4.6" fill="url(#h93)"/><rect x="1168.7" y="498.4" width="240.0" height="4.6" fill="url(#h94)"/><rect x="1171.7" y="502.4" width="232.0" height="4.6" fill="url(#h95)"/><rect x="1174.7" y="506.4" width="226.0" height="4.6" fill="url(#h96)"/><rect x="1177.7" y="510.4" width="218.0" height="4.6" fill="url(#h97)"/><rect x="1180.7" y="514.4" width="212.0" height="4.6" fill="url(#h98)"/><rect x="1184.7" y="518.4" width="204.0" height="4.6" fill="url(#h99)"/><rect x="1187.7" y="522.4" width="196.0" height="4.6" fill="url(#h100)"/><rect x="1191.7" y="526.4" width="188.0" height="4.6" fill="url(#h101)"/><rect x="1194.7" y="530.4" width="182.0" height="4.6" fill="url(#h102)"/><rect x="1198.7" y="534.4" width="174.0" height="4.6" fill="url(#h103)"/><rect x="1202.7" y="538.4" width="166.0" height="4.6" fill="url(#h104)"/><rect x="1206.7" y="542.4" width="158.0" height="4.6" fill="url(#h105)"/><rect x="1210.7" y="546.4" width="150.0" height="4.6" fill="url(#h106)"/><rect x="1214.7" y="550.4" width="142.0" height="4.6" fill="url(#h107)"/><rect x="1219.7" y="554.4" width="134.0" height="4.6" fill="url(#h108)"/><rect x="1223.7" y="558.4" width="126.0" height="4.6" fill="url(#h109)"/><rect x="1228.7" y="562.4" width="116.0" height="4.6" fill="url(#h110)"/><rect x="1232.7" y="566.4" width="108.0" height="4.6" fill="url(#h111)"/><rect x="1237.7" y="570.4" width="100.0" height="4.6" fill="url(#h112)"/><rect x="1242.7" y="574.4" width="90.0" height="4.6" fill="url(#h113)"/><rect x="1247.7" y="578.4" width="82.0" height="4.6" fill="url(#h114)"/><rect x="1252.7" y="582.4" width="72.0" height="4.6" fill="url(#h115)"/><rect x="1257.7" y="586.4" width="64.0" height="4.6" fill="url(#h116)"/><rect x="1261.7" y="590.4" width="56.0" height="4.6" fill="url(#h117)"/><rect x="1266.7" y="594.4" width="48.0" height="4.6" fill="url(#h118)"/><rect x="1271.7" y="598.4" width="38.0" height="4.6" fill="url(#h119)"/><rect x="1276.7" y="602.4" width="30.0" height="4.6" fill="url(#h120)"/><rect x="1282.7" y="606.4" width="20.0" height="4.6" fill="url(#h121)"/></g>
<path d="M1000,100 H1700 V640 H1000 Z M1549.3,180.6 L1125.7,137.9 L1207.5,481.7 Z" fill="#000" fill-opacity="0.4" fill-rule="evenodd"/>
</g></g>
<rect x="1020.7" y="121" width="639.0999999999999" height="491" fill="none" stroke="#a0a0a0" stroke-width="1.3"/>
<line x1="1015.7" y1="613.0" x2="1020.7" y2="613.0" stroke="#c8c8c8" stroke-width="1.3"/>
<text x="1014.4" y="618.2" font-size="14" fill="#d0d0d0" text-anchor="end">0</text>
<line x1="1015.7" y1="572.05" x2="1020.7" y2="572.05" stroke="#c8c8c8" stroke-width="1.3"/>
<text x="1014.4" y="577.25" font-size="14" fill="#d0d0d0" text-anchor="end">0,05</text>
<line x1="1015.7" y1="531.1" x2="1020.7" y2="531.1" stroke="#c8c8c8" stroke-width="1.3"/>
<text x="1014.4" y="536.3000000000001" font-size="14" fill="#d0d0d0" text-anchor="end">0,1</text>
<line x1="1015.7" y1="490.15" x2="1020.7" y2="490.15" stroke="#c8c8c8" stroke-width="1.3"/>
<text x="1014.4" y="495.34999999999997" font-size="14" fill="#d0d0d0" text-anchor="end">0,15</text>
<line x1="1015.7" y1="449.2" x2="1020.7" y2="449.2" stroke="#c8c8c8" stroke-width="1.3"/>
<text x="1014.4" y="454.4" font-size="14" fill="#d0d0d0" text-anchor="end">0,2</text>
<line x1="1015.7" y1="408.25" x2="1020.7" y2="408.25" stroke="#c8c8c8" stroke-width="1.3"/>
<text x="1014.4" y="413.45" font-size="14" fill="#d0d0d0" text-anchor="end">0,25</text>
<line x1="1015.7" y1="367.29999999999995" x2="1020.7" y2="367.29999999999995" stroke="#c8c8c8" stroke-width="1.3"/>
<text x="1014.4" y="372.49999999999994" font-size="14" fill="#d0d0d0" text-anchor="end">0,3</text>
<line x1="1015.7" y1="326.34999999999997" x2="1020.7" y2="326.34999999999997" stroke="#c8c8c8" stroke-width="1.3"/>
<text x="1014.4" y="331.54999999999995" font-size="14" fill="#d0d0d0" text-anchor="end">0,35</text>
<line x1="1015.7" y1="285.4" x2="1020.7" y2="285.4" stroke="#c8c8c8" stroke-width="1.3"/>
<text x="1014.4" y="290.59999999999997" font-size="14" fill="#d0d0d0" text-anchor="end">0,4</text>
<line x1="1015.7" y1="244.45" x2="1020.7" y2="244.45" stroke="#c8c8c8" stroke-width="1.3"/>
<text x="1014.4" y="249.64999999999998" font-size="14" fill="#d0d0d0" text-anchor="end">0,45</text>
<line x1="1015.7" y1="203.5" x2="1020.7" y2="203.5" stroke="#c8c8c8" stroke-width="1.3"/>
<text x="1014.4" y="208.7" font-size="14" fill="#d0d0d0" text-anchor="end">0,5</text>
<line x1="1015.7" y1="162.54999999999995" x2="1020.7" y2="162.54999999999995" stroke="#c8c8c8" stroke-width="1.3"/>
<text x="1014.4" y="167.74999999999994" font-size="14" fill="#d0d0d0" text-anchor="end">0,55</text>
<line x1="1020.7" y1="612" x2="1020.7" y2="617" stroke="#c8c8c8" stroke-width="1.3"/>
<text x="1020.7" y="633.8" font-size="14" fill="#d0d0d0" text-anchor="middle">0</text>
<line x1="1073.95" y1="612" x2="1073.95" y2="617" stroke="#c8c8c8" stroke-width="1.3"/>
<text x="1073.95" y="633.8" font-size="14" fill="#d0d0d0" text-anchor="middle">0,05</text>
<line x1="1127.2" y1="612" x2="1127.2" y2="617" stroke="#c8c8c8" stroke-width="1.3"/>
<text x="1127.2" y="633.8" font-size="14" fill="#d0d0d0" text-anchor="middle">0,1</text>
<line x1="1180.45" y1="612" x2="1180.45" y2="617" stroke="#c8c8c8" stroke-width="1.3"/>
<text x="1180.45" y="633.8" font-size="14" fill="#d0d0d0" text-anchor="middle">0,15</text>
<line x1="1233.7" y1="612" x2="1233.7" y2="617" stroke="#c8c8c8" stroke-width="1.3"/>
<text x="1233.7" y="633.8" font-size="14" fill="#d0d0d0" text-anchor="middle">0,2</text>
<line x1="1286.95" y1="612" x2="1286.95" y2="617" stroke="#c8c8c8" stroke-width="1.3"/>
<text x="1286.95" y="633.8" font-size="14" fill="#d0d0d0" text-anchor="middle">0,25</text>
<line x1="1340.2" y1="612" x2="1340.2" y2="617" stroke="#c8c8c8" stroke-width="1.3"/>
<text x="1340.2" y="633.8" font-size="14" fill="#d0d0d0" text-anchor="middle">0,3</text>
<line x1="1393.45" y1="612" x2="1393.45" y2="617" stroke="#c8c8c8" stroke-width="1.3"/>
<text x="1393.45" y="633.8" font-size="14" fill="#d0d0d0" text-anchor="middle">0,35</text>
<line x1="1446.7" y1="612" x2="1446.7" y2="617" stroke="#c8c8c8" stroke-width="1.3"/>
<text x="1446.7" y="633.8" font-size="14" fill="#d0d0d0" text-anchor="middle">0,4</text>
<line x1="1499.95" y1="612" x2="1499.95" y2="617" stroke="#c8c8c8" stroke-width="1.3"/>
<text x="1499.95" y="633.8" font-size="14" fill="#d0d0d0" text-anchor="middle">0,45</text>
<line x1="1553.2" y1="612" x2="1553.2" y2="617" stroke="#c8c8c8" stroke-width="1.3"/>
<text x="1553.2" y="633.8" font-size="14" fill="#d0d0d0" text-anchor="middle">0,5</text>
<line x1="1606.45" y1="612" x2="1606.45" y2="617" stroke="#c8c8c8" stroke-width="1.3"/>
<text x="1606.45" y="633.8" font-size="14" fill="#d0d0d0" text-anchor="middle">0,55</text>
<rect x="1542.5" y="173.8" width="13.6" height="13.6" fill="none" stroke="#ffffff" stroke-width="1.5"/>
<rect x="1118.9" y="131.1" width="13.6" height="13.6" fill="none" stroke="#ffffff" stroke-width="1.5"/>
<rect x="1200.7" y="474.9" width="13.6" height="13.6" fill="none" stroke="#ffffff" stroke-width="1.5"/>
<rect x="1143.1" y="232.7" width="13.6" height="13.6" fill="none" stroke="#ffffff" stroke-width="1.5"/>
<rect x="1359.5" y="335.0" width="13.6" height="13.6" fill="none" stroke="#ffffff" stroke-width="1.5"/>
<rect x="1231.9" y="142.5" width="13.6" height="13.6" fill="none" stroke="#ffffff" stroke-width="1.5"/>
<circle cx="1430.8" cy="172.5" r="4.2" fill="#c00000" stroke="#000" stroke-width="1.2"/>
<circle cx="1166.1" cy="144.9" r="4.2" fill="#00b000" stroke="#000" stroke-width="1.2"/>
<circle cx="1202.7" cy="461.3" r="4.2" fill="#0000c0" stroke="#000" stroke-width="1.2"/>
<circle cx="1178.1" cy="249.9" r="4.2" fill="#00b0b0" stroke="#000" stroke-width="1.2"/>
<circle cx="1285.3" cy="357.3" r="4.2" fill="#b000b0" stroke="#000" stroke-width="1.2"/>
<circle cx="1225.1" cy="150.8" r="4.2" fill="#b0b000" stroke="#000" stroke-width="1.2"/>
<circle cx="1218.6" cy="237.6" r="4.2" fill="#ffffff" stroke="#000" stroke-width="1.2"/>
<rect x="1224.2" y="221" width="13.2" height="13.2" fill="none" stroke="#000" stroke-width="2.3"/>
<rect x="1405" y="580" width="252" height="27" fill="#333333"/>
<text x="1406" y="601.6" font-size="18.5" fill="#f0f0f0" text-anchor="start" textLength="155" lengthAdjust="spacingAndGlyphs">Gamut Coverage:</text>
<text x="1572.4" y="601.6" font-size="18.5" fill="#f0f0f0" text-anchor="start" textLength="54.6" lengthAdjust="spacingAndGlyphs">62,8%</text>
<text x="17.2" y="713.2" font-size="28" fill="#f0f0f0" text-anchor="start" textLength="218.3" lengthAdjust="spacingAndGlyphs">Current Reading</text>
<text x="17.2" y="784" font-size="25" fill="#f0f0f0" text-anchor="start" textLength="88" lengthAdjust="spacingAndGlyphs">x: 0,289</text>
<text x="173.5" y="784" font-size="25" fill="#f0f0f0" text-anchor="start" textLength="102.3" lengthAdjust="spacingAndGlyphs">y: 0,3153</text>
<text x="17.2" y="825" font-size="25" fill="#f0f0f0" text-anchor="start" textLength="110.3" lengthAdjust="spacingAndGlyphs">fL: 116,88</text>
<text x="17.2" y="865.2" font-size="25" fill="#f0f0f0" text-anchor="start" textLength="158.2" lengthAdjust="spacingAndGlyphs">cd/m²: 400,45</text>
<text x="469.2" y="681.4" font-size="13.5" fill="#d8d8d8" text-anchor="middle" textLength="78" lengthAdjust="spacingAndGlyphs">RGB Balance</text>
<rect x="359.5" y="687.2" width="249.79999999999995" height="179.79999999999995" fill="#232323"/>
<line x1="359.5" y1="822.05" x2="609.3" y2="822.05" stroke="#8c8c8c" stroke-width="1.5"/>
<line x1="359.5" y1="777.1" x2="609.3" y2="777.1" stroke="#8c8c8c" stroke-width="1.5"/>
<line x1="359.5" y1="732.1500000000001" x2="609.3" y2="732.1500000000001" stroke="#8c8c8c" stroke-width="1.5"/>
<rect x="384" y="833.8" width="65.5" height="33.2" fill="url(#rbr)" stroke="#000" stroke-width="1.5"/>
<rect x="450.5" y="766.8" width="65.5" height="100.2" fill="url(#rbg)" stroke="#000" stroke-width="1.5"/>
<rect x="517" y="724.7" width="65.5" height="142.3" fill="url(#rbb)" stroke="#000" stroke-width="1.5"/>
<rect x="359.5" y="687.2" width="249.8" height="179.8" fill="none" stroke="#8c8c8c" stroke-width="1.5"/>
<line x1="354.5" y1="867.0" x2="359.5" y2="867.0" stroke="#c8c8c8" stroke-width="1.5"/>
<text x="354.0" y="872.5" font-size="14" fill="#d8d8d8" text-anchor="end">90</text>
<line x1="354.5" y1="822.05" x2="359.5" y2="822.05" stroke="#c8c8c8" stroke-width="1.5"/>
<text x="354.0" y="827.55" font-size="14" fill="#d8d8d8" text-anchor="end">95</text>
<line x1="354.5" y1="777.1" x2="359.5" y2="777.1" stroke="#c8c8c8" stroke-width="1.5"/>
<text x="354.0" y="782.6" font-size="14" fill="#d8d8d8" text-anchor="end">100</text>
<line x1="354.5" y1="732.1500000000001" x2="359.5" y2="732.1500000000001" stroke="#c8c8c8" stroke-width="1.5"/>
<text x="354.0" y="737.6500000000001" font-size="14" fill="#d8d8d8" text-anchor="end">105</text>
<line x1="354.5" y1="687.2" x2="359.5" y2="687.2" stroke="#c8c8c8" stroke-width="1.5"/>
<text x="354.0" y="692.7" font-size="14" fill="#d8d8d8" text-anchor="end">110</text>
<line x1="359.0" y1="867" x2="609.8" y2="867" stroke="#a4a4a4" stroke-width="2.2"/>
<line x1="359.5" y1="867" x2="359.5" y2="872" stroke="#c8c8c8" stroke-width="1.5"/>
<line x1="609.3" y1="867" x2="609.3" y2="872" stroke="#c8c8c8" stroke-width="1.5"/>
<text x="484.5" y="883.6" font-size="13.5" fill="#d8d8d8" text-anchor="middle">100W</text>
<text x="810" y="672.6" font-size="13.5" fill="#d8d8d8" text-anchor="middle" textLength="75" lengthAdjust="spacingAndGlyphs">CIE 1931 xy</text>
<g clip-path="url(#xyclip)"><g filter="url(#hblur)"><rect x="633.8" y="672.8" width="354.0" height="6.6" fill="url(#x0)"/><rect x="633.8" y="678.8" width="354.0" height="6.6" fill="url(#x1)"/><rect x="633.8" y="684.8" width="354.0" height="6.6" fill="url(#x2)"/><rect x="633.8" y="690.8" width="354.0" height="6.6" fill="url(#x3)"/><rect x="633.8" y="696.8" width="354.0" height="6.6" fill="url(#x4)"/><rect x="633.8" y="702.8" width="354.0" height="6.6" fill="url(#x5)"/><rect x="633.8" y="708.8" width="354.0" height="6.6" fill="url(#x6)"/><rect x="633.8" y="714.8" width="354.0" height="6.6" fill="url(#x7)"/><rect x="633.8" y="720.8" width="354.0" height="6.6" fill="url(#x8)"/><rect x="633.8" y="726.8" width="354.0" height="6.6" fill="url(#x9)"/><rect x="633.8" y="732.8" width="354.0" height="6.6" fill="url(#x10)"/><rect x="633.8" y="738.8" width="354.0" height="6.6" fill="url(#x11)"/><rect x="633.8" y="744.8" width="354.0" height="6.6" fill="url(#x12)"/><rect x="633.8" y="750.8" width="354.0" height="6.6" fill="url(#x13)"/><rect x="633.8" y="756.8" width="354.0" height="6.6" fill="url(#x14)"/><rect x="633.8" y="762.8" width="354.0" height="6.6" fill="url(#x15)"/><rect x="633.8" y="768.8" width="354.0" height="6.6" fill="url(#x16)"/><rect x="633.8" y="774.8" width="354.0" height="6.6" fill="url(#x17)"/><rect x="633.8" y="780.8" width="354.0" height="6.6" fill="url(#x18)"/><rect x="633.8" y="786.8" width="354.0" height="6.6" fill="url(#x19)"/><rect x="633.8" y="792.8" width="354.0" height="6.6" fill="url(#x20)"/><rect x="633.8" y="798.8" width="354.0" height="6.6" fill="url(#x21)"/><rect x="633.8" y="804.8" width="354.0" height="6.6" fill="url(#x22)"/><rect x="633.8" y="810.8" width="354.0" height="6.6" fill="url(#x23)"/><rect x="633.8" y="816.8" width="354.0" height="6.6" fill="url(#x24)"/><rect x="633.8" y="822.8" width="354.0" height="6.6" fill="url(#x25)"/><rect x="633.8" y="828.8" width="354.0" height="6.6" fill="url(#x26)"/><rect x="633.8" y="834.8" width="354.0" height="6.6" fill="url(#x27)"/><rect x="633.8" y="840.8" width="354.0" height="6.6" fill="url(#x28)"/><rect x="633.8" y="846.8" width="354.0" height="6.6" fill="url(#x29)"/><rect x="633.8" y="852.8" width="354.0" height="6.6" fill="url(#x30)"/><rect x="633.8" y="858.8" width="354.0" height="6.6" fill="url(#x31)"/><rect x="633.8" y="864.8" width="354.0" height="6.6" fill="url(#x32)"/><rect x="633.8" y="870.8" width="354.0" height="6.6" fill="url(#x33)"/><rect x="633.8" y="876.8" width="354.0" height="6.6" fill="url(#x34)"/></g></g>
<rect x="639.8" y="678.8" width="340.5" height="197.5" fill="none" stroke="#9a9a9a" stroke-width="1.2"/>
<rect x="801.5" y="769" width="14.5" height="14.5" fill="#ffffff" stroke="#000" stroke-width="2.2"/>
<circle cx="658.1" cy="831.2" r="4.3" fill="#bdbdbd" stroke="#000" stroke-width="1.2"/>
<circle cx="668.1" cy="824" r="4.3" fill="#ffffff" stroke="#000" stroke-width="1.2"/>
<rect x="997" y="661" width="653" height="226" fill="#000000"/>
<rect x="999" y="663" width="649" height="224" fill="#333333"/>
<rect x="999" y="663" width="633" height="17" fill="#2e2e2e"/>
<rect x="999" y="680" width="633" height="17" fill="#141414"/>
<rect x="999" y="697" width="633" height="31" fill="#3c3c3c"/>
<rect x="999" y="728" width="633" height="31" fill="#777777"/>
<rect x="999" y="759" width="633" height="31" fill="#3c3c3c"/>
<rect x="999" y="790" width="633" height="31" fill="#777777"/>
<rect x="999" y="821" width="633" height="31" fill="#3c3c3c"/>
<rect x="999" y="852" width="633" height="15" fill="#777777"/>
<text x="1130.2" y="686.4" font-size="16.5" fill="#f0f0f0" text-anchor="middle" textLength="41.5" lengthAdjust="spacingAndGlyphs">White</text>
<text x="1203" y="686.4" font-size="16.5" fill="#f0f0f0" text-anchor="middle">Red</text>
<text x="1276" y="686.4" font-size="16.5" fill="#f0f0f0" text-anchor="middle">Green</text>
<text x="1348.6" y="686.4" font-size="16.5" fill="#f0f0f0" text-anchor="middle">Blue</text>
<text x="1422" y="686.4" font-size="16.5" fill="#f0f0f0" text-anchor="middle">Cyan</text>
<text x="1496.5" y="686.4" font-size="16.5" fill="#f0f0f0" text-anchor="middle">Magenta</text>
<text x="1570.7" y="686.4" font-size="16.5" fill="#f0f0f0" text-anchor="middle">Yellow</text>
<g clip-path="url(#tclip)">
<text x="1629" y="686.4" font-size="16.5" fill="#f0f0f0" text-anchor="start">100W</text>
<text x="1011.4" y="719.7" font-size="18" fill="#f0f0f0" text-anchor="start" font-weight="bold" textLength="62.8" lengthAdjust="spacingAndGlyphs">x: CIE31</text>
<text x="1095.5" y="719.7" font-size="18.3" fill="#f0f0f0" text-anchor="start" textLength="49.5" lengthAdjust="spacingAndGlyphs">0,2873</text>
<text x="1173.4" y="719.7" font-size="18.3" fill="#f0f0f0" text-anchor="start" textLength="49.5" lengthAdjust="spacingAndGlyphs">0,6034</text>
<text x="1241.8" y="719.7" font-size="18.3" fill="#f0f0f0" text-anchor="start" textLength="49.5" lengthAdjust="spacingAndGlyphs">0,3308</text>
<text x="1319.3" y="719.7" font-size="18.3" fill="#f0f0f0" text-anchor="start" textLength="49.5" lengthAdjust="spacingAndGlyphs">0,1523</text>
<text x="1388.5" y="719.7" font-size="18.3" fill="#f0f0f0" text-anchor="start" textLength="49.5" lengthAdjust="spacingAndGlyphs">0,2281</text>
<text x="1466" y="719.7" font-size="18.3" fill="#f0f0f0" text-anchor="start" textLength="49.5" lengthAdjust="spacingAndGlyphs">0,2620</text>
<text x="1536.9" y="719.7" font-size="18.3" fill="#f0f0f0" text-anchor="start" textLength="49.5" lengthAdjust="spacingAndGlyphs">0,4151</text>
<text x="1614.3" y="719.7" font-size="18.3" fill="#f0f0f0" text-anchor="start" textLength="49.5" lengthAdjust="spacingAndGlyphs">0,2873</text>
<text x="1011.4" y="750.7" font-size="18" fill="#f0f0f0" text-anchor="start" font-weight="bold" textLength="63" lengthAdjust="spacingAndGlyphs">y: CIE31</text>
<text x="1095.5" y="750.7" font-size="18.3" fill="#f0f0f0" text-anchor="start" textLength="49.5" lengthAdjust="spacingAndGlyphs">0,3133</text>
<text x="1173.4" y="750.7" font-size="18.3" fill="#f0f0f0" text-anchor="start" textLength="49.5" lengthAdjust="spacingAndGlyphs">0,3729</text>
<text x="1241.8" y="750.7" font-size="18.3" fill="#f0f0f0" text-anchor="start" textLength="49.5" lengthAdjust="spacingAndGlyphs">0,6130</text>
<text x="1319.3" y="750.7" font-size="18.3" fill="#f0f0f0" text-anchor="start" textLength="49.5" lengthAdjust="spacingAndGlyphs">0,0724</text>
<text x="1388.5" y="750.7" font-size="18.3" fill="#f0f0f0" text-anchor="start" textLength="49.5" lengthAdjust="spacingAndGlyphs">0,3024</text>
<text x="1466" y="750.7" font-size="18.3" fill="#f0f0f0" text-anchor="start" textLength="49.5" lengthAdjust="spacingAndGlyphs">0,1452</text>
<text x="1536.9" y="750.7" font-size="18.3" fill="#f0f0f0" text-anchor="start" textLength="49.5" lengthAdjust="spacingAndGlyphs">0,5400</text>
<text x="1614.3" y="750.7" font-size="18.3" fill="#f0f0f0" text-anchor="start" textLength="49.5" lengthAdjust="spacingAndGlyphs">0,3133</text>
<text x="1011.4" y="781.7" font-size="18" fill="#f0f0f0" text-anchor="start" font-weight="bold" textLength="11.4" lengthAdjust="spacingAndGlyphs">Y</text>
<text x="1095.5" y="781.7" font-size="18.3" fill="#f0f0f0" text-anchor="start" textLength="68.0" lengthAdjust="spacingAndGlyphs">212,6119</text>
<text x="1173.4" y="781.7" font-size="18.3" fill="#f0f0f0" text-anchor="start" textLength="58.8" lengthAdjust="spacingAndGlyphs">39,6921</text>
<text x="1241.8" y="781.7" font-size="18.3" fill="#f0f0f0" text-anchor="start" textLength="68.0" lengthAdjust="spacingAndGlyphs">148,2910</text>
<text x="1319.3" y="781.7" font-size="18.3" fill="#f0f0f0" text-anchor="start" textLength="58.8" lengthAdjust="spacingAndGlyphs">23,9028</text>
<text x="1388.5" y="781.7" font-size="18.3" fill="#f0f0f0" text-anchor="start" textLength="68.0" lengthAdjust="spacingAndGlyphs">173,6387</text>
<text x="1466" y="781.7" font-size="18.3" fill="#f0f0f0" text-anchor="start" textLength="58.8" lengthAdjust="spacingAndGlyphs">63,3217</text>
<text x="1536.9" y="781.7" font-size="18.3" fill="#f0f0f0" text-anchor="start" textLength="68.0" lengthAdjust="spacingAndGlyphs">187,8932</text>
<text x="1614.3" y="781.7" font-size="18.3" fill="#f0f0f0" text-anchor="start" textLength="49.5" lengthAdjust="spacingAndGlyphs">400,45</text>
<text x="1011.4" y="812.7" font-size="18" fill="#f0f0f0" text-anchor="start" font-weight="bold" textLength="66.4" lengthAdjust="spacingAndGlyphs">Target Y</text>
<text x="1095.5" y="812.7" font-size="18.3" fill="#f0f0f0" text-anchor="start" textLength="68.0" lengthAdjust="spacingAndGlyphs">212,0939</text>
<text x="1173.4" y="812.7" font-size="18.3" fill="#f0f0f0" text-anchor="start" textLength="58.8" lengthAdjust="spacingAndGlyphs">48,5672</text>
<text x="1241.8" y="812.7" font-size="18.3" fill="#f0f0f0" text-anchor="start" textLength="68.0" lengthAdjust="spacingAndGlyphs">146,7119</text>
<text x="1319.3" y="812.7" font-size="18.3" fill="#f0f0f0" text-anchor="start" textLength="58.8" lengthAdjust="spacingAndGlyphs">16,8148</text>
<text x="1388.5" y="812.7" font-size="18.3" fill="#f0f0f0" text-anchor="start" textLength="68.0" lengthAdjust="spacingAndGlyphs">163,5267</text>
<text x="1466" y="812.7" font-size="18.3" fill="#f0f0f0" text-anchor="start" textLength="58.8" lengthAdjust="spacingAndGlyphs">65,3820</text>
<text x="1536.9" y="812.7" font-size="18.3" fill="#f0f0f0" text-anchor="start" textLength="68.0" lengthAdjust="spacingAndGlyphs">195,2790</text>
<text x="1614.3" y="812.7" font-size="18.3" fill="#f0f0f0" text-anchor="start" textLength="49.5" lengthAdjust="spacingAndGlyphs">400,00</text>
<text x="1011.4" y="843.7" font-size="18" fill="#f0f0f0" text-anchor="start" font-weight="bold" textLength="65.6" lengthAdjust="spacingAndGlyphs">ΔE 2000</text>
<text x="1095.5" y="843.7" font-size="18.3" fill="#f0f0f0" text-anchor="start" textLength="49.5" lengthAdjust="spacingAndGlyphs">9,0375</text>
<text x="1173.4" y="843.7" font-size="18.3" fill="#f0f0f0" text-anchor="start" textLength="49.5" lengthAdjust="spacingAndGlyphs">9,8073</text>
<text x="1241.8" y="843.7" font-size="18.3" fill="#f0f0f0" text-anchor="start" textLength="49.5" lengthAdjust="spacingAndGlyphs">7,2093</text>
<text x="1319.3" y="843.7" font-size="18.3" fill="#f0f0f0" text-anchor="start" textLength="49.5" lengthAdjust="spacingAndGlyphs">4,5767</text>
<text x="1388.5" y="843.7" font-size="18.3" fill="#f0f0f0" text-anchor="start" textLength="58.8" lengthAdjust="spacingAndGlyphs">10,9730</text>
<text x="1466" y="843.7" font-size="18.3" fill="#f0f0f0" text-anchor="start" textLength="49.5" lengthAdjust="spacingAndGlyphs">9,0528</text>
<text x="1536.9" y="843.7" font-size="18.3" fill="#f0f0f0" text-anchor="start" textLength="49.5" lengthAdjust="spacingAndGlyphs">4,9902</text>
<text x="1614.3" y="843.7" font-size="18.3" fill="#f0f0f0" text-anchor="start" textLength="58.8" lengthAdjust="spacingAndGlyphs">10,2200</text>
<text x="1011.4" y="874.7" font-size="18" fill="#f0f0f0" text-anchor="start" font-weight="bold" textLength="58" lengthAdjust="spacingAndGlyphs">ΔE ITP</text>
<text x="1095.5" y="874.7" font-size="18.3" fill="#f0f0f0" text-anchor="start" textLength="58.8" lengthAdjust="spacingAndGlyphs">15,3053</text>
<text x="1173.4" y="874.7" font-size="18.3" fill="#f0f0f0" text-anchor="start" textLength="58.8" lengthAdjust="spacingAndGlyphs">87,3831</text>
<text x="1241.8" y="874.7" font-size="18.3" fill="#f0f0f0" text-anchor="start" textLength="58.8" lengthAdjust="spacingAndGlyphs">32,0004</text>
<text x="1319.3" y="874.7" font-size="18.3" fill="#f0f0f0" text-anchor="start" textLength="58.8" lengthAdjust="spacingAndGlyphs">10,0063</text>
<text x="1388.5" y="874.7" font-size="18.3" fill="#f0f0f0" text-anchor="start" textLength="58.8" lengthAdjust="spacingAndGlyphs">25,9423</text>
<text x="1466" y="874.7" font-size="18.3" fill="#f0f0f0" text-anchor="start" textLength="58.8" lengthAdjust="spacingAndGlyphs">84,9121</text>
<text x="1536.9" y="874.7" font-size="18.3" fill="#f0f0f0" text-anchor="start" textLength="58.8" lengthAdjust="spacingAndGlyphs">15,4068</text>
<text x="1614.3" y="874.7" font-size="18.3" fill="#f0f0f0" text-anchor="start" textLength="58.8" lengthAdjust="spacingAndGlyphs">14,0000</text>
</g>
<rect x="1632" y="697" width="17" height="170" fill="#5c5c5c"/>
<rect x="1633.5" y="698.5" width="14" height="16.5" rx="3.5" fill="#6a6a6a" stroke="#808080" stroke-width="1"/>
<path d="M1635.5,709.5 L1640.5,703.5 L1645.5,709.5 Z" fill="#3c3c3c"/>
<rect x="1634.5" y="719" width="12.5" height="105" rx="6" fill="#3e3e3e"/>
<rect x="1633.5" y="849.5" width="14" height="16" rx="3.5" fill="#6a6a6a" stroke="#808080" stroke-width="1"/>
<path d="M1635.5,854.5 L1645.5,854.5 L1640.5,860.5 Z" fill="#3c3c3c"/>
<path d="M999,867 H1632 V881 Q1632,886.5 1626.5,886.5 H1004.5 Q999,886.5 999,881 Z" fill="#5c5c5c"/>
<rect x="1000.5" y="869" width="13.5" height="16.5" rx="3.5" fill="#6a6a6a" stroke="#808080" stroke-width="1"/>
<path d="M1010.5,871.5 L1004.5,877 L1010.5,882.5 Z" fill="#3c3c3c"/>
<rect x="1017" y="869.5" width="547" height="15" rx="7.5" fill="#3e3e3e"/>
<rect x="1616.5" y="869" width="13.5" height="16.5" rx="3.5" fill="#6a6a6a" stroke="#808080" stroke-width="1"/>
<path d="M1620.5,871.5 L1626.5,877 L1620.5,882.5 Z" fill="#3c3c3c"/>
<rect x="1660" y="648" width="11" height="242" fill="url(#redge)"/>
<rect x="3.5" y="930.7" width="155" height="84" rx="5" fill="url(#bbg)"/>
<rect x="10.0" y="937" width="142" height="45" rx="5" fill="#c0c0c0"/>
<rect x="10.0" y="937" width="142" height="45" rx="5" fill="url(#swsh)" stroke="#000" stroke-opacity="0.14" stroke-width="1"/>
<text x="81.0" y="1000.5" font-size="13" fill="#2a2a2a" text-anchor="middle" font-weight="bold">White</text>
<rect x="161.5" y="930.7" width="155" height="84" rx="5" fill="url(#bbg)"/>
<rect x="168.0" y="937" width="142" height="45" rx="5" fill="#c00000"/>
<rect x="168.0" y="937" width="142" height="45" rx="5" fill="url(#swsh)" stroke="#000" stroke-opacity="0.14" stroke-width="1"/>
<text x="239.0" y="1000.5" font-size="13" fill="#2a2a2a" text-anchor="middle" font-weight="bold">Red</text>
<rect x="319.5" y="930.7" width="155" height="84" rx="5" fill="url(#bbg)"/>
<rect x="326.0" y="937" width="142" height="45" rx="5" fill="#00c000"/>
<rect x="326.0" y="937" width="142" height="45" rx="5" fill="url(#swsh)" stroke="#000" stroke-opacity="0.14" stroke-width="1"/>
<text x="397.0" y="1000.5" font-size="13" fill="#2a2a2a" text-anchor="middle" font-weight="bold">Green</text>
<rect x="477.5" y="930.7" width="155" height="84" rx="5" fill="url(#bbg)"/>
<rect x="484.0" y="937" width="142" height="45" rx="5" fill="#0000c0"/>
<rect x="484.0" y="937" width="142" height="45" rx="5" fill="url(#swsh)" stroke="#000" stroke-opacity="0.14" stroke-width="1"/>
<text x="555.0" y="1000.5" font-size="13" fill="#2a2a2a" text-anchor="middle" font-weight="bold">Blue</text>
<rect x="635.5" y="930.7" width="155" height="84" rx="5" fill="url(#bbg)"/>
<rect x="642.0" y="937" width="142" height="45" rx="5" fill="#00c0c0"/>
<rect x="642.0" y="937" width="142" height="45" rx="5" fill="url(#swsh)" stroke="#000" stroke-opacity="0.14" stroke-width="1"/>
<text x="713.0" y="1000.5" font-size="13" fill="#2a2a2a" text-anchor="middle" font-weight="bold">Cyan</text>
<rect x="793.5" y="930.7" width="155" height="84" rx="5" fill="url(#bbg)"/>
<rect x="800.0" y="937" width="142" height="45" rx="5" fill="#c000c0"/>
<rect x="800.0" y="937" width="142" height="45" rx="5" fill="url(#swsh)" stroke="#000" stroke-opacity="0.14" stroke-width="1"/>
<text x="871.0" y="1000.5" font-size="13" fill="#2a2a2a" text-anchor="middle" font-weight="bold">Magenta</text>
<rect x="951.5" y="930.7" width="155" height="84" rx="5" fill="url(#bbg)"/>
<rect x="958.0" y="937" width="142" height="45" rx="5" fill="#c0c000"/>
<rect x="958.0" y="937" width="142" height="45" rx="5" fill="url(#swsh)" stroke="#000" stroke-opacity="0.14" stroke-width="1"/>
<text x="1029.0" y="1000.5" font-size="13" fill="#2a2a2a" text-anchor="middle" font-weight="bold">Yellow</text>
<rect x="1109.5" y="930.7" width="155" height="84" rx="5" fill="#2a2a2a"/>
<rect x="1116.0" y="937" width="142" height="45" rx="5" fill="#ffffff" stroke="#dcdcdc" stroke-width="1"/>
<text x="1187.0" y="1000.5" font-size="13" fill="#ffffff" text-anchor="middle" font-weight="bold">100W</text>
<rect x="1266" y="929" width="1.6" height="78" fill="#1e1e1e"/>
<path d="M1268.6,1007 V935 Q1268.6,930.3 1273.3,930.3 H1322.9 Q1327.6,930.3 1327.6,935 V1007 Z" fill="url(#cbg)"/>
<line x1="1268.6" y1="952.7" x2="1327.6" y2="952.7" stroke="#5e5e5e" stroke-width="1.4"/>
<circle cx="1298" cy="941.4" r="10" fill="url(#cbc)"/>
<path d="M1292.5,944.5 L1298,938.5 L1303.5,944.5 Z" fill="#2a2a2a"/>
<rect x="1279.5" y="962" width="37" height="37" rx="5" fill="#a4a4a4" stroke="#262626" stroke-width="3.5"/>
<rect x="1289.5" y="971.6" width="18.5" height="18" fill="#0a0a0a"/>
<rect x="1329" y="929.8" width="282.7" height="39" fill="url(#cbg2)"/>
<line x1="1387.4" y1="929.8" x2="1387.4" y2="968.8" stroke="#2e2e2e" stroke-width="1.3"/>
<line x1="1443.2" y1="929.8" x2="1443.2" y2="968.8" stroke="#2e2e2e" stroke-width="1.3"/>
<line x1="1499.8" y1="929.8" x2="1499.8" y2="968.8" stroke="#2e2e2e" stroke-width="1.3"/>
<line x1="1556.4" y1="929.8" x2="1556.4" y2="968.8" stroke="#2e2e2e" stroke-width="1.3"/>
<line x1="1329" y1="968.8" x2="1611.7" y2="968.8" stroke="#2e2e2e" stroke-width="1.3"/>
<circle cx="1358.4" cy="949.5" r="12.3" fill="url(#cbc)"/>
<circle cx="1415.4" cy="949.5" r="12.3" fill="url(#cbc)"/>
<circle cx="1471.5" cy="949.5" r="12.3" fill="url(#cbc)"/>
<circle cx="1528" cy="949.5" r="12.3" fill="url(#cbc)"/>
<circle cx="1584.2" cy="949.5" r="12.3" fill="url(#cbc)"/>
<rect x="1353" y="944" width="10" height="10" fill="#2e2e2e"/>
<path d="M1411.5,943 L1421,949.8 L1411.5,956.5 Z" fill="#2e2e2e"/>
<path d="M1467.5,943.5 H1465.3 V955.5 H1467.5 M1475.5,943.5 H1477.7 V955.5 H1475.5" fill="none" stroke="#2e2e2e" stroke-width="2"/>
<circle cx="1469.8" cy="949.5" r="1" fill="#2e2e2e"/><circle cx="1473.2" cy="949.5" r="1" fill="#2e2e2e"/>
<path d="M1528,949.5 C1525,945.5 1521,945.5 1521,949.5 C1521,953.5 1525,953.5 1528,949.5 C1531,945.5 1535,945.5 1535,949.5 C1535,953.5 1531,953.5 1528,949.5 Z" fill="none" stroke="#2e2e2e" stroke-width="2"/>
<path d="M1579,947.5 A5.5,5.5 0 0 1 1589,946.5" fill="none" stroke="#2e2e2e" stroke-width="2.2"/><path d="M1589.5,951.5 A5.5,5.5 0 0 1 1579.5,952.5" fill="none" stroke="#2e2e2e" stroke-width="2.2"/>
<path d="M1586.5,944 L1591,947.8 L1585.5,948.5 Z M1582,955 L1577.5,951.2 L1583,950.5 Z" fill="#2e2e2e"/>
<rect x="1329" y="969.5" width="171" height="40" fill="url(#cbg2)"/>
<rect x="1500.5" y="969.5" width="172" height="40" fill="url(#cbg2)"/>
<line x1="1500" y1="969" x2="1500" y2="1007" stroke="#2e2e2e" stroke-width="1.4"/>
<circle cx="1368.2" cy="987.6" r="12" fill="url(#cbc)"/>
<circle cx="1633.8" cy="987.6" r="12" fill="url(#cbc)"/>
<path d="M1367.5,982 L1362.5,987.5 L1367.5,993 M1373,982 L1368,987.5 L1373,993" fill="none" stroke="#2e2e2e" stroke-width="1.8"/>
<path d="M1629,982 L1634,987.5 L1629,993 M1634.5,982 L1639.5,987.5 L1634.5,993" fill="none" stroke="#2e2e2e" stroke-width="1.8"/>
<text x="1401.4" y="997.5" font-size="25" fill="#303030" text-anchor="start" textLength="62.6" lengthAdjust="spacingAndGlyphs" stroke="#303030" stroke-width="0.7">Back</text>
<text x="1535.5" y="997.5" font-size="25" fill="#303030" text-anchor="start" textLength="64" lengthAdjust="spacingAndGlyphs" stroke="#303030" stroke-width="0.7">Next</text>
<g transform="translate(1639.2,947.1)" stroke="#e20c0c" stroke-width="6.8" stroke-linecap="round" filter="url(#ashadow)"><line x1="0" y1="-13.5" x2="0" y2="13.5" transform="rotate(0)"/><line x1="0" y1="-13.5" x2="0" y2="13.5" transform="rotate(60)"/><line x1="0" y1="-13.5" x2="0" y2="13.5" transform="rotate(120)"/></g>
</svg></body></html>
